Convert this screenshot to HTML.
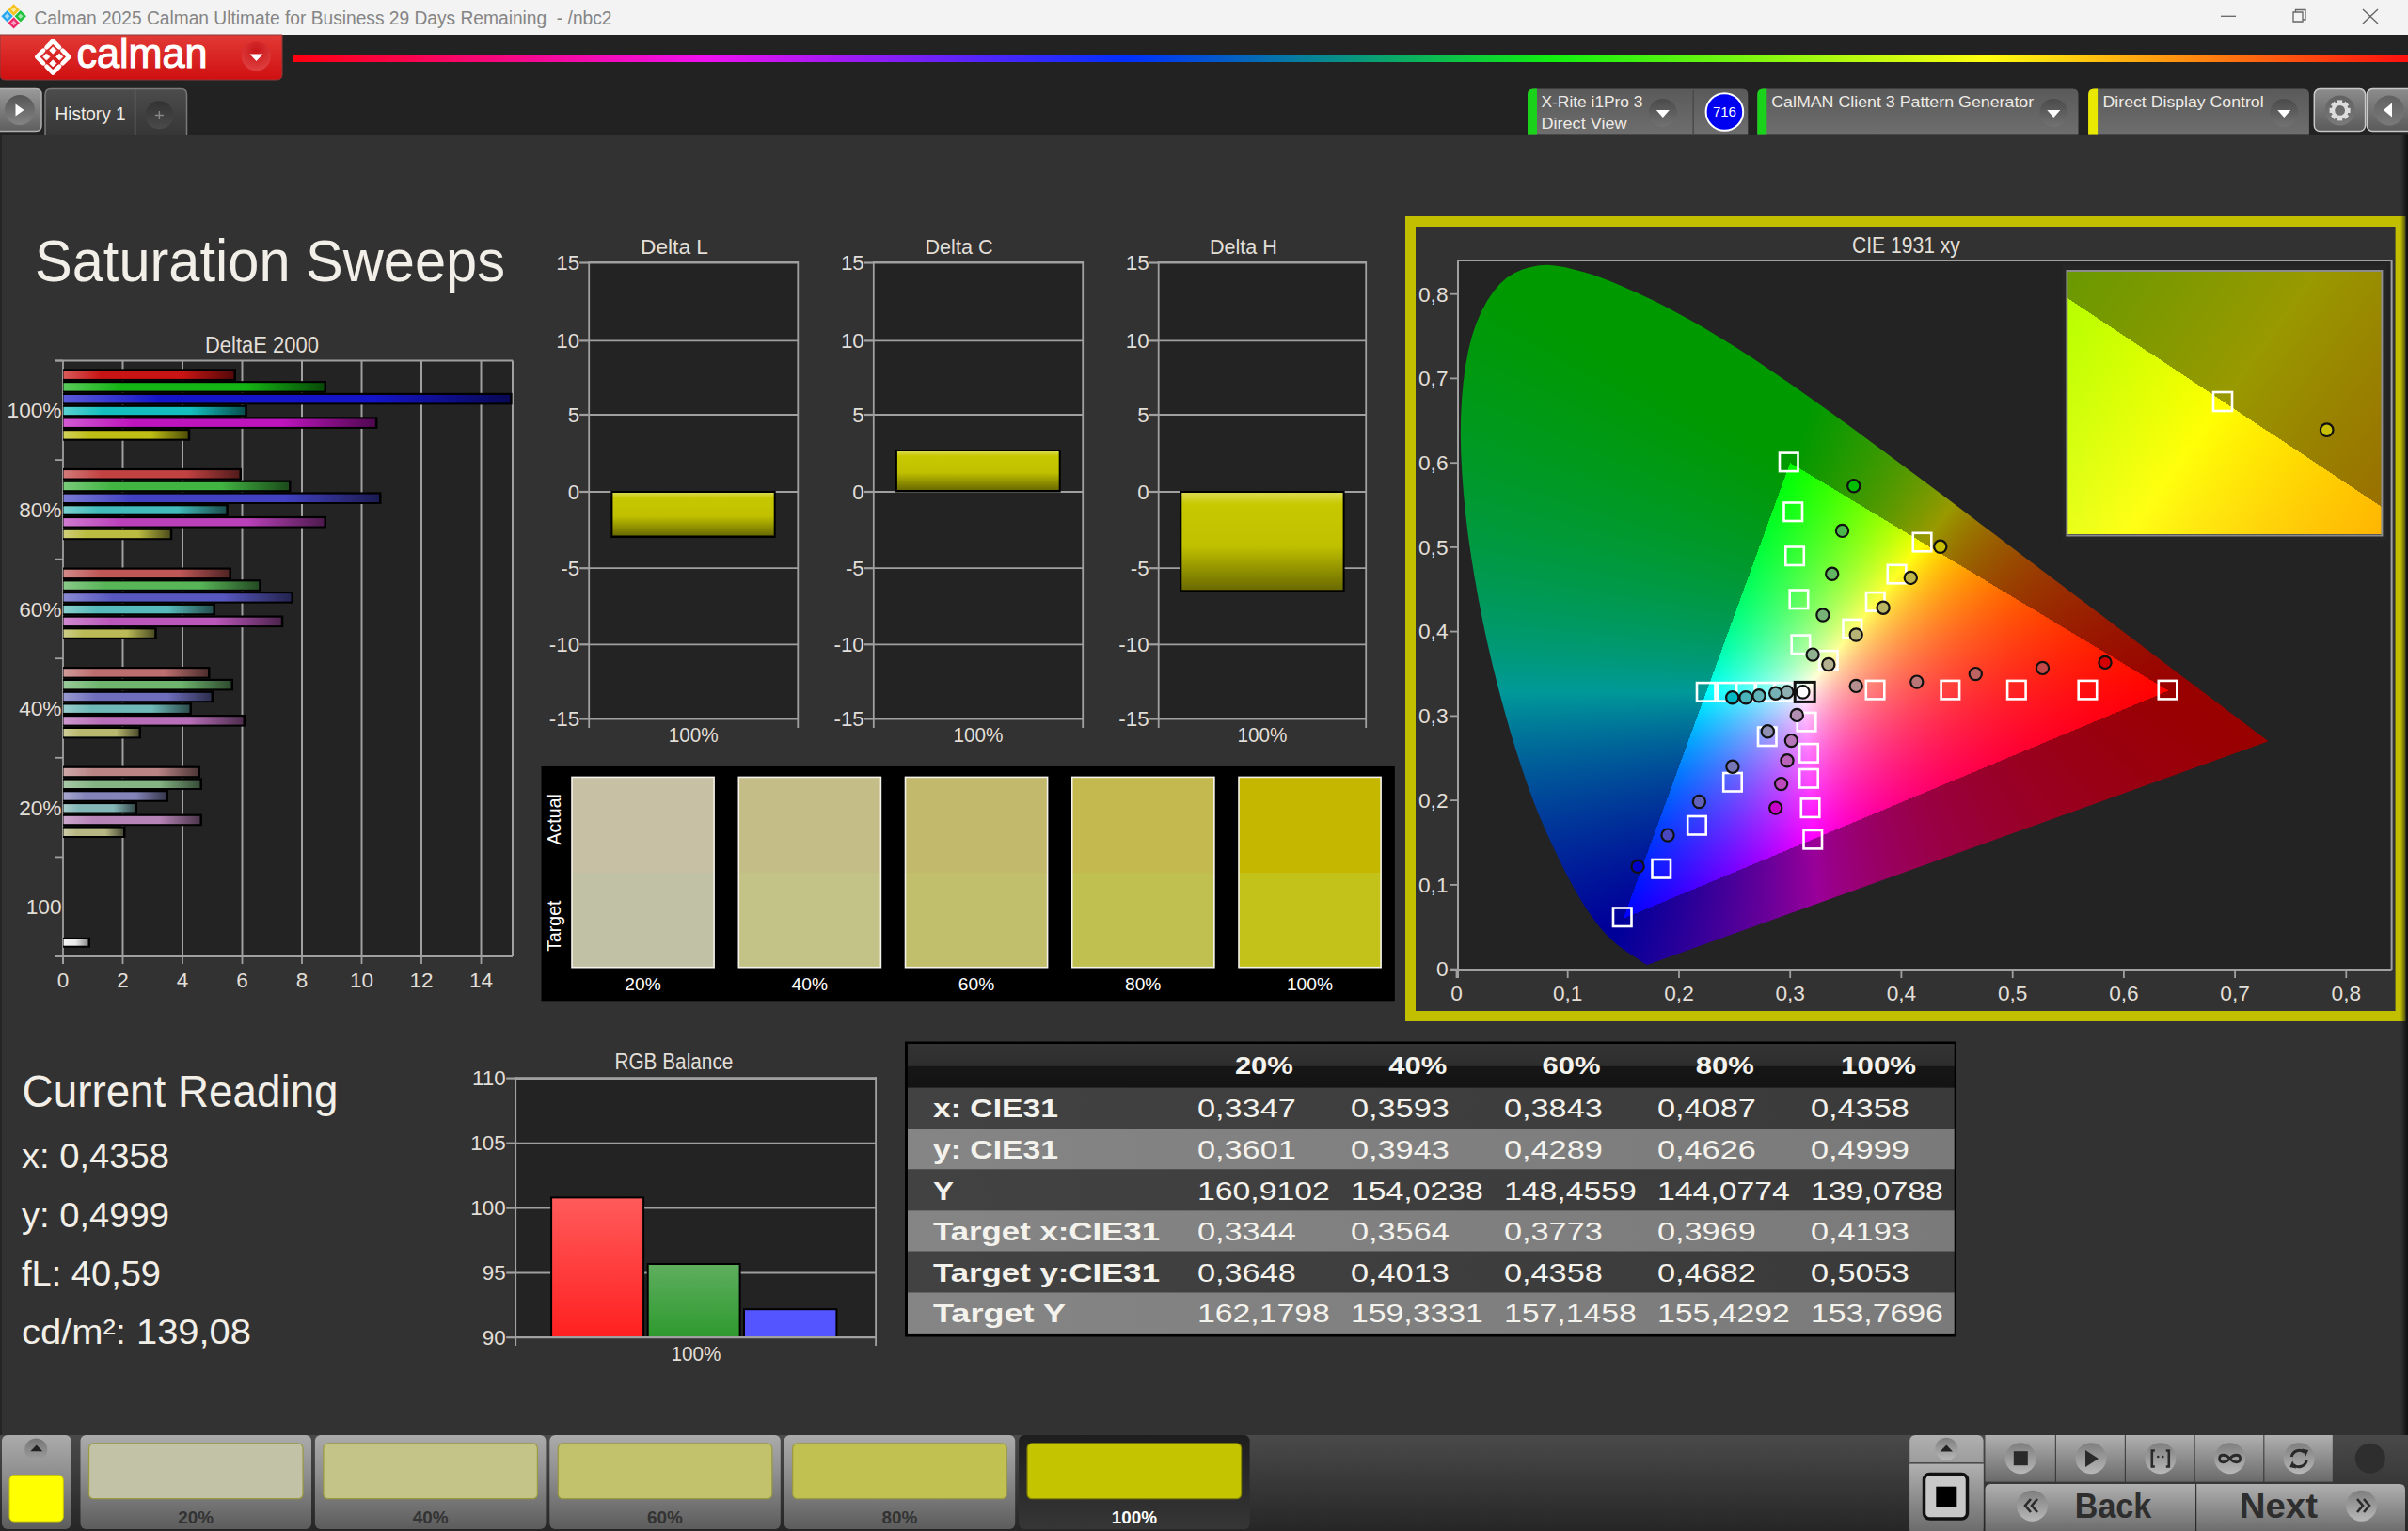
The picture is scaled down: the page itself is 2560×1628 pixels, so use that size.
<!DOCTYPE html>
<html><head><meta charset="utf-8"><title>Calman</title>
<style>
html,body{margin:0;padding:0;width:2560px;height:1628px;overflow:hidden;background:#323232;}
body{position:relative;font-family:"Liberation Sans", sans-serif;}
svg{position:absolute;left:0;top:0;}
canvas{position:absolute;}
</style></head><body>
<svg width="2560" height="1628" viewBox="0 0 2560 1628" font-family='"Liberation Sans", sans-serif'>
<defs><linearGradient id="gLogo" x1="0" y1="0" x2="0" y2="1"><stop offset="0" stop-color="#e23a36"/><stop offset="1" stop-color="#cf0f10"/></linearGradient><radialGradient id="gDrop" cx="0.5" cy="0.3" r="0.7"><stop offset="0" stop-color="#c8161a"/><stop offset="1" stop-color="#e04040"/></radialGradient><linearGradient id="gRain" x1="0" y1="0" x2="1" y2="0"><stop offset="0" stop-color="#ff0010"/><stop offset="0.195" stop-color="#f010f0"/><stop offset="0.395" stop-color="#0030ff"/><stop offset="0.595" stop-color="#10f010"/><stop offset="0.8" stop-color="#ffff10"/><stop offset="1" stop-color="#ff1010"/></linearGradient><linearGradient id="gBtn" x1="0" y1="0" x2="0" y2="1"><stop offset="0" stop-color="#9a9a9a"/><stop offset="1" stop-color="#5e5e5e"/></linearGradient><linearGradient id="gCirc" x1="0" y1="0" x2="0" y2="1"><stop offset="0" stop-color="#4a4a4a"/><stop offset="1" stop-color="#8a8a8a"/></linearGradient><linearGradient id="gTab" x1="0" y1="0" x2="0" y2="1"><stop offset="0" stop-color="#4c4c4c"/><stop offset="1" stop-color="#363636"/></linearGradient><linearGradient id="gPlus" x1="0" y1="0" x2="0" y2="1"><stop offset="0" stop-color="#333"/><stop offset="1" stop-color="#4a4a4a"/></linearGradient><linearGradient id="gDev" x1="0" y1="0" x2="0" y2="1"><stop offset="0" stop-color="#5a5a5a"/><stop offset="1" stop-color="#6e6e6e"/></linearGradient><linearGradient id="gDrop2" x1="0" y1="0" x2="0" y2="1"><stop offset="0" stop-color="#4a4a4a"/><stop offset="1" stop-color="#727272"/></linearGradient><linearGradient id="gGear" x1="0" y1="0" x2="0" y2="1"><stop offset="0" stop-color="#8c8c8c"/><stop offset="1" stop-color="#5a5a5a"/></linearGradient><linearGradient id="gEdge" x1="0" y1="0" x2="1" y2="0"><stop offset="0" stop-color="#222" stop-opacity="0"/><stop offset="1" stop-color="#111"/></linearGradient><linearGradient id="gb1" x1="0" y1="0" x2="1" y2="0"><stop offset="0" stop-color="#d85a5a"/><stop offset="0.22" stop-color="#c81414"/><stop offset="0.7" stop-color="#c81414"/><stop offset="1" stop-color="#540808"/></linearGradient><linearGradient id="gb2" x1="0" y1="0" x2="1" y2="0"><stop offset="0" stop-color="#5aca5a"/><stop offset="0.22" stop-color="#14b414"/><stop offset="0.7" stop-color="#14b414"/><stop offset="1" stop-color="#084b08"/></linearGradient><linearGradient id="gb3" x1="0" y1="0" x2="1" y2="0"><stop offset="0" stop-color="#5a5ad8"/><stop offset="0.22" stop-color="#1414c8"/><stop offset="0.7" stop-color="#1414c8"/><stop offset="1" stop-color="#080854"/></linearGradient><linearGradient id="gb4" x1="0" y1="0" x2="1" y2="0"><stop offset="0" stop-color="#5ad1d1"/><stop offset="0.22" stop-color="#14bebe"/><stop offset="0.7" stop-color="#14bebe"/><stop offset="1" stop-color="#084f4f"/></linearGradient><linearGradient id="gb5" x1="0" y1="0" x2="1" y2="0"><stop offset="0" stop-color="#d15ad1"/><stop offset="0.22" stop-color="#be14be"/><stop offset="0.7" stop-color="#be14be"/><stop offset="1" stop-color="#4f084f"/></linearGradient><linearGradient id="gb6" x1="0" y1="0" x2="1" y2="0"><stop offset="0" stop-color="#d1d15a"/><stop offset="0.22" stop-color="#bebe14"/><stop offset="0.7" stop-color="#bebe14"/><stop offset="1" stop-color="#4f4f08"/></linearGradient><linearGradient id="gb7" x1="0" y1="0" x2="1" y2="0"><stop offset="0" stop-color="#d47a7a"/><stop offset="0.22" stop-color="#c24141"/><stop offset="0.7" stop-color="#c24141"/><stop offset="1" stop-color="#511b1b"/></linearGradient><linearGradient id="gb8" x1="0" y1="0" x2="1" y2="0"><stop offset="0" stop-color="#7aca7a"/><stop offset="0.22" stop-color="#41b441"/><stop offset="0.7" stop-color="#41b441"/><stop offset="1" stop-color="#1b4b1b"/></linearGradient><linearGradient id="gb9" x1="0" y1="0" x2="1" y2="0"><stop offset="0" stop-color="#7a7ad4"/><stop offset="0.22" stop-color="#4141c2"/><stop offset="0.7" stop-color="#4141c2"/><stop offset="1" stop-color="#1b1b51"/></linearGradient><linearGradient id="gb10" x1="0" y1="0" x2="1" y2="0"><stop offset="0" stop-color="#7acfcf"/><stop offset="0.22" stop-color="#41bbbb"/><stop offset="0.7" stop-color="#41bbbb"/><stop offset="1" stop-color="#1b4e4e"/></linearGradient><linearGradient id="gb11" x1="0" y1="0" x2="1" y2="0"><stop offset="0" stop-color="#cf7acf"/><stop offset="0.22" stop-color="#bb41bb"/><stop offset="0.7" stop-color="#bb41bb"/><stop offset="1" stop-color="#4e1b4e"/></linearGradient><linearGradient id="gb12" x1="0" y1="0" x2="1" y2="0"><stop offset="0" stop-color="#cfcf7a"/><stop offset="0.22" stop-color="#bbbb41"/><stop offset="0.7" stop-color="#bbbb41"/><stop offset="1" stop-color="#4e4e1b"/></linearGradient><linearGradient id="gb13" x1="0" y1="0" x2="1" y2="0"><stop offset="0" stop-color="#d28989"/><stop offset="0.22" stop-color="#c05757"/><stop offset="0.7" stop-color="#c05757"/><stop offset="1" stop-color="#502424"/></linearGradient><linearGradient id="gb14" x1="0" y1="0" x2="1" y2="0"><stop offset="0" stop-color="#89ca89"/><stop offset="0.22" stop-color="#57b457"/><stop offset="0.7" stop-color="#57b457"/><stop offset="1" stop-color="#244b24"/></linearGradient><linearGradient id="gb15" x1="0" y1="0" x2="1" y2="0"><stop offset="0" stop-color="#8989d2"/><stop offset="0.22" stop-color="#5757c0"/><stop offset="0.7" stop-color="#5757c0"/><stop offset="1" stop-color="#242450"/></linearGradient><linearGradient id="gb16" x1="0" y1="0" x2="1" y2="0"><stop offset="0" stop-color="#89cece"/><stop offset="0.22" stop-color="#57baba"/><stop offset="0.7" stop-color="#57baba"/><stop offset="1" stop-color="#244e4e"/></linearGradient><linearGradient id="gb17" x1="0" y1="0" x2="1" y2="0"><stop offset="0" stop-color="#ce89ce"/><stop offset="0.22" stop-color="#ba57ba"/><stop offset="0.7" stop-color="#ba57ba"/><stop offset="1" stop-color="#4e244e"/></linearGradient><linearGradient id="gb18" x1="0" y1="0" x2="1" y2="0"><stop offset="0" stop-color="#cece89"/><stop offset="0.22" stop-color="#baba57"/><stop offset="0.7" stop-color="#baba57"/><stop offset="1" stop-color="#4e4e24"/></linearGradient><linearGradient id="gb19" x1="0" y1="0" x2="1" y2="0"><stop offset="0" stop-color="#d09999"/><stop offset="0.22" stop-color="#bd6e6e"/><stop offset="0.7" stop-color="#bd6e6e"/><stop offset="1" stop-color="#4f2e2e"/></linearGradient><linearGradient id="gb20" x1="0" y1="0" x2="1" y2="0"><stop offset="0" stop-color="#99ca99"/><stop offset="0.22" stop-color="#6eb46e"/><stop offset="0.7" stop-color="#6eb46e"/><stop offset="1" stop-color="#2e4b2e"/></linearGradient><linearGradient id="gb21" x1="0" y1="0" x2="1" y2="0"><stop offset="0" stop-color="#9999d0"/><stop offset="0.22" stop-color="#6e6ebd"/><stop offset="0.7" stop-color="#6e6ebd"/><stop offset="1" stop-color="#2e2e4f"/></linearGradient><linearGradient id="gb22" x1="0" y1="0" x2="1" y2="0"><stop offset="0" stop-color="#99cdcd"/><stop offset="0.22" stop-color="#6eb8b8"/><stop offset="0.7" stop-color="#6eb8b8"/><stop offset="1" stop-color="#2e4d4d"/></linearGradient><linearGradient id="gb23" x1="0" y1="0" x2="1" y2="0"><stop offset="0" stop-color="#cd99cd"/><stop offset="0.22" stop-color="#b86eb8"/><stop offset="0.7" stop-color="#b86eb8"/><stop offset="1" stop-color="#4d2e4d"/></linearGradient><linearGradient id="gb24" x1="0" y1="0" x2="1" y2="0"><stop offset="0" stop-color="#cdcd99"/><stop offset="0.22" stop-color="#b8b86e"/><stop offset="0.7" stop-color="#b8b86e"/><stop offset="1" stop-color="#4d4d2e"/></linearGradient><linearGradient id="gb25" x1="0" y1="0" x2="1" y2="0"><stop offset="0" stop-color="#cea8a8"/><stop offset="0.22" stop-color="#ba8484"/><stop offset="0.7" stop-color="#ba8484"/><stop offset="1" stop-color="#4e3737"/></linearGradient><linearGradient id="gb26" x1="0" y1="0" x2="1" y2="0"><stop offset="0" stop-color="#a8caa8"/><stop offset="0.22" stop-color="#84b484"/><stop offset="0.7" stop-color="#84b484"/><stop offset="1" stop-color="#374b37"/></linearGradient><linearGradient id="gb27" x1="0" y1="0" x2="1" y2="0"><stop offset="0" stop-color="#a8a8ce"/><stop offset="0.22" stop-color="#8484ba"/><stop offset="0.7" stop-color="#8484ba"/><stop offset="1" stop-color="#37374e"/></linearGradient><linearGradient id="gb28" x1="0" y1="0" x2="1" y2="0"><stop offset="0" stop-color="#a8cccc"/><stop offset="0.22" stop-color="#84b7b7"/><stop offset="0.7" stop-color="#84b7b7"/><stop offset="1" stop-color="#374c4c"/></linearGradient><linearGradient id="gb29" x1="0" y1="0" x2="1" y2="0"><stop offset="0" stop-color="#cca8cc"/><stop offset="0.22" stop-color="#b784b7"/><stop offset="0.7" stop-color="#b784b7"/><stop offset="1" stop-color="#4c374c"/></linearGradient><linearGradient id="gb30" x1="0" y1="0" x2="1" y2="0"><stop offset="0" stop-color="#cccca8"/><stop offset="0.22" stop-color="#b7b784"/><stop offset="0.7" stop-color="#b7b784"/><stop offset="1" stop-color="#4c4c37"/></linearGradient><linearGradient id="gWhite" x1="0" y1="0" x2="1" y2="0"><stop offset="0" stop-color="#f4f4f4"/><stop offset="0.5" stop-color="#e8e8e8"/><stop offset="1" stop-color="#8a8a8a"/></linearGradient><linearGradient id="gYel" x1="0" y1="0" x2="0" y2="1"><stop offset="0" stop-color="#dada50"/><stop offset="0.12" stop-color="#c8c800"/><stop offset="0.55" stop-color="#c0c000"/><stop offset="1" stop-color="#6a6a00"/></linearGradient><linearGradient id="gRed" x1="0" y1="0" x2="0" y2="1"><stop offset="0" stop-color="#ff5a5a"/><stop offset="1" stop-color="#ff2020"/></linearGradient><linearGradient id="gGrn" x1="0" y1="0" x2="0" y2="1"><stop offset="0" stop-color="#5eae5e"/><stop offset="1" stop-color="#2e9a2e"/></linearGradient><linearGradient id="gHdr" x1="0" y1="0" x2="0" y2="1"><stop offset="0" stop-color="#333"/><stop offset="0.5" stop-color="#2e2e2e"/><stop offset="0.52" stop-color="#161616"/><stop offset="1" stop-color="#131313"/></linearGradient><linearGradient id="gRowD" x1="0" y1="0" x2="1" y2="0"><stop offset="0" stop-color="#424242"/><stop offset="1" stop-color="#3a3a3a"/></linearGradient><linearGradient id="gRowL" x1="0" y1="0" x2="1" y2="0"><stop offset="0" stop-color="#858585"/><stop offset="1" stop-color="#7a7a7a"/></linearGradient><linearGradient id="gFall" x1="0" y1="0" x2="0" y2="1"><stop offset="0" stop-color="#009900"/><stop offset="0.45" stop-color="#009a40"/><stop offset="0.62" stop-color="#009a9a"/><stop offset="0.8" stop-color="#0030a0"/><stop offset="1" stop-color="#0000a0"/></linearGradient><linearGradient id="gFallU" x1="0" y1="0" x2="1" y2="0"><stop offset="0" stop-color="#2a9a00"/><stop offset="0.5" stop-color="#9a8a00"/><stop offset="1" stop-color="#9a0000"/></linearGradient><linearGradient id="gFallP" x1="0" y1="0" x2="1" y2="0"><stop offset="0" stop-color="#10009a"/><stop offset="0.5" stop-color="#8a009a"/><stop offset="1" stop-color="#9a0010"/></linearGradient><linearGradient id="gT1" gradientUnits="userSpaceOnUse" x1="1903.2" y1="492.2" x2="2305.2" y2="734.5"><stop offset="0" stop-color="#00ff00"/><stop offset="0.5" stop-color="#ffff00"/><stop offset="1" stop-color="#ff0000"/></linearGradient><linearGradient id="gT2" gradientUnits="userSpaceOnUse" x1="2305.2" y1="734.5" x2="1725.8" y2="976.8"><stop offset="0" stop-color="#ff0000"/><stop offset="0.5" stop-color="#ff00ff"/><stop offset="1" stop-color="#0000ff"/></linearGradient><linearGradient id="gT3" gradientUnits="userSpaceOnUse" x1="1725.8" y1="976.8" x2="1903.2" y2="492.2"><stop offset="0" stop-color="#0000ff"/><stop offset="0.5" stop-color="#00ffff"/><stop offset="1" stop-color="#00ff00"/></linearGradient><radialGradient id="gTW" gradientUnits="userSpaceOnUse" cx="1918.2" cy="735.4" r="160"><stop offset="0" stop-color="#fff" stop-opacity="1"/><stop offset="1" stop-color="#fff" stop-opacity="0"/></radialGradient><linearGradient id="gInA" x1="0" y1="0" x2="1" y2="1"><stop offset="0" stop-color="#5a9400"/><stop offset="1" stop-color="#9a7400"/></linearGradient><linearGradient id="gInB" x1="0" y1="0" x2="1" y2="1"><stop offset="0" stop-color="#b0ff00"/><stop offset="0.5" stop-color="#ffff10"/><stop offset="1" stop-color="#ffb000"/></linearGradient><linearGradient id="gBar" x1="0" y1="0" x2="0" y2="1"><stop offset="0" stop-color="#4a4a4a"/><stop offset="1" stop-color="#262626"/></linearGradient><linearGradient id="gPan" x1="0" y1="0" x2="0" y2="1"><stop offset="0" stop-color="#ababab"/><stop offset="0.45" stop-color="#8c8c8c"/><stop offset="1" stop-color="#5c5c5c"/></linearGradient><linearGradient id="gPanSel" x1="0" y1="0" x2="0" y2="1"><stop offset="0" stop-color="#1e1e1e"/><stop offset="1" stop-color="#363636"/></linearGradient><linearGradient id="gUp" x1="0" y1="0" x2="0" y2="1"><stop offset="0" stop-color="#767676"/><stop offset="1" stop-color="#9e9e9e"/></linearGradient><linearGradient id="gCtl" x1="0" y1="0" x2="0" y2="1"><stop offset="0" stop-color="#b0b0b0"/><stop offset="1" stop-color="#6a6a6a"/></linearGradient><linearGradient id="gCtlC" x1="0" y1="0" x2="0" y2="1"><stop offset="0" stop-color="#7e7e7e"/><stop offset="1" stop-color="#b8b8b8"/></linearGradient></defs>
<rect x="0.0" y="0.0" width="2560.0" height="37.0" fill="#f3f3f3"/><path d="M14.6 4.3 L20.8 10.5 L14.6 16.7 L8.399999999999999 10.5 Z" fill="#f7c21a"/><path d="M14.6 7.71 L17.39 10.5 L14.6 13.29 L11.809999999999999 10.5 Z" fill="#fbe59a"/><path d="M7.6 11.100000000000001 L13.8 17.3 L7.6 23.5 L1.3999999999999995 17.3 Z" fill="#29a8f0"/><path d="M7.6 14.510000000000002 L10.39 17.3 L7.6 20.09 L4.81 17.3 Z" fill="#a9dcf8"/><path d="M21.8 11.100000000000001 L28.0 17.3 L21.8 23.5 L15.600000000000001 17.3 Z" fill="#1fc23a"/><path d="M21.8 14.510000000000002 L24.59 17.3 L21.8 20.09 L19.01 17.3 Z" fill="#9fe5aa"/><path d="M14.6 18.2 L20.8 24.4 L14.6 30.599999999999998 L8.399999999999999 24.4 Z" fill="#ee2a6a"/><path d="M14.6 21.61 L17.39 24.4 L14.6 27.189999999999998 L11.809999999999999 24.4 Z" fill="#f7a5c0"/><text x="36.5" y="25.9" font-size="19.33" fill="#858585" textLength="614.0" lengthAdjust="spacingAndGlyphs">Calman 2025 Calman Ultimate for Business 29 Days Remaining&#160; - /nbc2</text><line x1="2361.0" y1="17.3" x2="2377.0" y2="17.3" stroke="#666" stroke-width="1.3"/><path d="M2438 13 h10 v10 h-10 Z M2440.5 13 v-2.5 h10.5 v10.5 h-3" fill="none" stroke="#666" stroke-width="1.3"/><path d="M2512 10 L2528 25 M2528 10 L2512 25" stroke="#666" stroke-width="1.4"/><rect x="0.0" y="37.0" width="2560.0" height="107.0" fill="#222222"/><path d="M0 37 H300 V79 Q300 85 294 85 H6 Q0 85 0 79 Z" fill="url(#gLogo)" stroke="#8a3a3a" stroke-width="1"/><path d="M49.50 50.30 L56.30 43.50 L63.10 50.30 M66.50 53.70 L73.30 60.50 L66.50 67.30 M63.10 70.70 L56.30 77.50 L49.50 70.70 M46.10 67.30 L39.30 60.50 L46.10 53.70" fill="none" stroke="#fff" stroke-width="4.6" stroke-linecap="round" stroke-linejoin="round"/><path d="M56.3 50.0 L59.9 53.6 L56.3 57.2 L52.7 53.6 Z" fill="#fff" stroke="#fff" stroke-width="0.8" stroke-linejoin="round"/><path d="M49.4 56.9 L53.0 60.5 L49.4 64.1 L45.8 60.5 Z" fill="#fff" stroke="#fff" stroke-width="0.8" stroke-linejoin="round"/><path d="M63.2 56.9 L66.8 60.5 L63.2 64.1 L59.6 60.5 Z" fill="#fff" stroke="#fff" stroke-width="0.8" stroke-linejoin="round"/><path d="M56.3 63.8 L59.9 67.4 L56.3 71.0 L52.7 67.4 Z" fill="#fff" stroke="#fff" stroke-width="0.8" stroke-linejoin="round"/><text x="81.5" y="71.8" font-size="44.13" fill="#ffffff" textLength="139.0" lengthAdjust="spacingAndGlyphs" stroke="#fff" stroke-width="1.1">calman</text><circle cx="272.4" cy="59.8" r="15.5" fill="url(#gDrop)"/><path d="M265.5 57.5 H279.5 L272.5 65 Z" fill="#fff"/><rect x="311.0" y="58.0" width="2249.0" height="8.0" fill="url(#gRain)"/><path d="M-6 94.5 H38 Q44 94.5 44 100.5 V133.5 Q44 139.5 38 139.5 H-6 Z" fill="url(#gBtn)" stroke="#b0b0b0" stroke-width="1.5"/><circle cx="21" cy="117" r="16" fill="url(#gCirc)" opacity="0.85"/><path d="M16.5 110.5 L25.5 117 L16.5 123.5 Z" fill="#fff"/><path d="M48 144 V100.5 Q48 94.6 54 94.6 H192.5 Q198.5 94.6 198.5 100.5 V144" fill="url(#gTab)" stroke="#7a7a7a" stroke-width="1.5"/><line x1="143.6" y1="95.5" x2="143.6" y2="144.0" stroke="#6a6a6a" stroke-width="1.5"/><text x="58.5" y="128.2" font-size="19.33" fill="#eeebe6" textLength="75.0" lengthAdjust="spacingAndGlyphs">History 1</text><circle cx="169.4" cy="122.3" r="15" fill="url(#gPlus)"/><path d="M169.4 118 V127 M164.9 122.5 H173.9" stroke="#888" stroke-width="1.4"/><path d="M1624 143.6 V100.6 Q1624 94.6 1630 94.6 H1852.3 Q1858.3 94.6 1858.3 100.6 V143.6 Z" fill="url(#gDev)"/><path d="M1624 143.6 V100.6 Q1624 94.6 1630 94.6 H1634 V143.6 Z" fill="#1ad21a"/><text x="1638.5" y="114.0" font-size="16.86" fill="#eeebe6" textLength="108.0" lengthAdjust="spacingAndGlyphs">X-Rite i1Pro 3</text><text x="1638.5" y="137.3" font-size="16.86" fill="#eeebe6" textLength="91.0" lengthAdjust="spacingAndGlyphs">Direct View</text><circle cx="1767.8" cy="119.9" r="15" fill="url(#gDrop2)"/><path d="M1760.8 117 H1774.8 L1767.8 125 Z" fill="#fff"/><line x1="1800.2" y1="96.0" x2="1800.2" y2="143.6" stroke="#4a4a4a" stroke-width="1.5"/><circle cx="1833.4" cy="119" r="19.8" fill="#0000f0" stroke="#fff" stroke-width="2"/><text x="1833.4" y="124.0" font-size="14.53" fill="#ffffff" text-anchor="middle" textLength="25.0" lengthAdjust="spacingAndGlyphs">716</text><path d="M1868.3 143.6 V100.6 Q1868.3 94.6 1874.3 94.6 H2203.5 Q2209.5 94.6 2209.5 100.6 V143.6 Z" fill="url(#gDev)"/><path d="M1868.3 143.6 V100.6 Q1868.3 94.6 1874.3 94.6 H1878.3 V143.6 Z" fill="#1ad21a"/><text x="1883.2" y="114.0" font-size="16.86" fill="#eeebe6" textLength="279.0" lengthAdjust="spacingAndGlyphs">CalMAN Client 3 Pattern Generator</text><circle cx="2183.3" cy="119.9" r="15" fill="url(#gDrop2)"/><path d="M2176.3 117 H2190.3 L2183.3 125 Z" fill="#fff"/><path d="M2220.1 143.6 V100.6 Q2220.1 94.6 2226.1 94.6 H2448.9 Q2454.9 94.6 2454.9 100.6 V143.6 Z" fill="url(#gDev)"/><path d="M2220.1 143.6 V100.6 Q2220.1 94.6 2226.1 94.6 H2230.1 V143.6 Z" fill="#e8e800"/><text x="2235.6" y="114.0" font-size="16.86" fill="#eeebe6" textLength="171.0" lengthAdjust="spacingAndGlyphs">Direct Display Control</text><circle cx="2428.3" cy="119.9" r="15" fill="url(#gDrop2)"/><path d="M2421.3 117 H2435.3 L2428.3 125 Z" fill="#fff"/><rect x="2460.3" y="94.6" width="54.3" height="44.9" rx="6" fill="url(#gGear)" stroke="#c8c8c8" stroke-width="1.5"/><circle cx="2487.6" cy="117.4" r="16" fill="url(#gCirc)" opacity="0.6"/><rect x="-2.6" y="-11" width="5.2" height="5" transform="translate(2487.6 117.4) rotate(0)" fill="#ddd"/><rect x="-2.6" y="-11" width="5.2" height="5" transform="translate(2487.6 117.4) rotate(45)" fill="#ddd"/><rect x="-2.6" y="-11" width="5.2" height="5" transform="translate(2487.6 117.4) rotate(90)" fill="#ddd"/><rect x="-2.6" y="-11" width="5.2" height="5" transform="translate(2487.6 117.4) rotate(135)" fill="#ddd"/><rect x="-2.6" y="-11" width="5.2" height="5" transform="translate(2487.6 117.4) rotate(180)" fill="#ddd"/><rect x="-2.6" y="-11" width="5.2" height="5" transform="translate(2487.6 117.4) rotate(225)" fill="#ddd"/><rect x="-2.6" y="-11" width="5.2" height="5" transform="translate(2487.6 117.4) rotate(270)" fill="#ddd"/><rect x="-2.6" y="-11" width="5.2" height="5" transform="translate(2487.6 117.4) rotate(315)" fill="#ddd"/><circle cx="2487.6" cy="117.4" r="7.2" fill="none" stroke="#ddd" stroke-width="3.6"/><rect x="2516.3" y="94.6" width="60" height="44.9" rx="6" fill="url(#gGear)" stroke="#c8c8c8" stroke-width="1.5"/><circle cx="2540" cy="117.4" r="16" fill="url(#gCirc)" opacity="0.6"/><path d="M2534 117 L2543 109.5 V124.5 Z" fill="#fff"/><rect x="2552.0" y="144.0" width="8.0" height="1382.0" fill="url(#gEdge)"/><text x="37.0" y="299.0" font-size="62.94" fill="#f2efe8" textLength="500.0" lengthAdjust="spacingAndGlyphs">Saturation Sweeps</text><text x="278.4" y="375.0" font-size="23.98" fill="#e2dfd8" text-anchor="middle" textLength="121.0" lengthAdjust="spacingAndGlyphs">DeltaE 2000</text><rect x="67.0" y="383.5" width="478.0" height="633.5" fill="#232323"/><line x1="130.5" y1="383.5" x2="130.5" y2="1017.0" stroke="#a0a0a0" stroke-width="2"/><line x1="194.0" y1="383.5" x2="194.0" y2="1017.0" stroke="#a0a0a0" stroke-width="2"/><line x1="257.5" y1="383.5" x2="257.5" y2="1017.0" stroke="#a0a0a0" stroke-width="2"/><line x1="321.0" y1="383.5" x2="321.0" y2="1017.0" stroke="#a0a0a0" stroke-width="2"/><line x1="384.5" y1="383.5" x2="384.5" y2="1017.0" stroke="#a0a0a0" stroke-width="2"/><line x1="448.0" y1="383.5" x2="448.0" y2="1017.0" stroke="#a0a0a0" stroke-width="2"/><line x1="511.5" y1="383.5" x2="511.5" y2="1017.0" stroke="#a0a0a0" stroke-width="2"/><line x1="545.0" y1="383.5" x2="545.0" y2="1017.0" stroke="#a0a0a0" stroke-width="2"/><line x1="58.0" y1="383.5" x2="545.0" y2="383.5" stroke="#a0a0a0" stroke-width="1.8"/><line x1="67.0" y1="383.5" x2="67.0" y2="1025.0" stroke="#a0a0a0" stroke-width="1.8"/><line x1="58.0" y1="1017.0" x2="545.0" y2="1017.0" stroke="#a0a0a0" stroke-width="1.8"/><line x1="58.0" y1="383.5" x2="67.0" y2="383.5" stroke="#a0a0a0" stroke-width="1.8"/><line x1="58.0" y1="489.1" x2="67.0" y2="489.1" stroke="#a0a0a0" stroke-width="1.8"/><line x1="58.0" y1="594.7" x2="67.0" y2="594.7" stroke="#a0a0a0" stroke-width="1.8"/><line x1="58.0" y1="700.2" x2="67.0" y2="700.2" stroke="#a0a0a0" stroke-width="1.8"/><line x1="58.0" y1="805.8" x2="67.0" y2="805.8" stroke="#a0a0a0" stroke-width="1.8"/><line x1="58.0" y1="911.4" x2="67.0" y2="911.4" stroke="#a0a0a0" stroke-width="1.8"/><line x1="58.0" y1="1017.0" x2="67.0" y2="1017.0" stroke="#a0a0a0" stroke-width="1.8"/><line x1="67.0" y1="1017.0" x2="67.0" y2="1025.0" stroke="#a0a0a0" stroke-width="1.8"/><text x="67.0" y="1050.0" font-size="22.53" fill="#e2dfd8" text-anchor="middle">0</text><line x1="130.5" y1="1017.0" x2="130.5" y2="1025.0" stroke="#a0a0a0" stroke-width="1.8"/><text x="130.5" y="1050.0" font-size="22.53" fill="#e2dfd8" text-anchor="middle">2</text><line x1="194.0" y1="1017.0" x2="194.0" y2="1025.0" stroke="#a0a0a0" stroke-width="1.8"/><text x="194.0" y="1050.0" font-size="22.53" fill="#e2dfd8" text-anchor="middle">4</text><line x1="257.5" y1="1017.0" x2="257.5" y2="1025.0" stroke="#a0a0a0" stroke-width="1.8"/><text x="257.5" y="1050.0" font-size="22.53" fill="#e2dfd8" text-anchor="middle">6</text><line x1="321.0" y1="1017.0" x2="321.0" y2="1025.0" stroke="#a0a0a0" stroke-width="1.8"/><text x="321.0" y="1050.0" font-size="22.53" fill="#e2dfd8" text-anchor="middle">8</text><line x1="384.5" y1="1017.0" x2="384.5" y2="1025.0" stroke="#a0a0a0" stroke-width="1.8"/><text x="384.5" y="1050.0" font-size="22.53" fill="#e2dfd8" text-anchor="middle">10</text><line x1="448.0" y1="1017.0" x2="448.0" y2="1025.0" stroke="#a0a0a0" stroke-width="1.8"/><text x="448.0" y="1050.0" font-size="22.53" fill="#e2dfd8" text-anchor="middle">12</text><line x1="511.5" y1="1017.0" x2="511.5" y2="1025.0" stroke="#a0a0a0" stroke-width="1.8"/><text x="511.5" y="1050.0" font-size="22.53" fill="#e2dfd8" text-anchor="middle">14</text><text x="65.5" y="444.3" font-size="22.67" fill="#e2dfd8" text-anchor="end">100%</text><text x="65.5" y="549.9" font-size="22.67" fill="#e2dfd8" text-anchor="end">80%</text><text x="65.5" y="655.5" font-size="22.67" fill="#e2dfd8" text-anchor="end">60%</text><text x="65.5" y="761.0" font-size="22.67" fill="#e2dfd8" text-anchor="end">40%</text><text x="65.5" y="866.6" font-size="22.67" fill="#e2dfd8" text-anchor="end">20%</text><text x="65.5" y="972.2" font-size="22.67" fill="#e2dfd8" text-anchor="end">100</text><rect x="67.0" y="392.3" width="184.0" height="12.6" fill="#000"/><rect x="67.5" y="394.5" width="181.0" height="8.4" fill="url(#gb1)"/><rect x="67.0" y="405.1" width="280.0" height="12.6" fill="#000"/><rect x="67.5" y="407.2" width="277.0" height="8.4" fill="url(#gb2)"/><rect x="67.0" y="417.8" width="477.6" height="12.6" fill="#000"/><rect x="67.5" y="420.0" width="474.6" height="8.4" fill="url(#gb3)"/><rect x="67.0" y="430.6" width="195.8" height="12.6" fill="#000"/><rect x="67.5" y="432.8" width="192.8" height="8.4" fill="url(#gb4)"/><rect x="67.0" y="443.3" width="334.4" height="12.6" fill="#000"/><rect x="67.5" y="445.5" width="331.4" height="8.4" fill="url(#gb5)"/><rect x="67.0" y="456.1" width="135.2" height="12.6" fill="#000"/><rect x="67.5" y="458.2" width="132.2" height="8.4" fill="url(#gb6)"/><rect x="67.0" y="497.9" width="190.0" height="12.6" fill="#000"/><rect x="67.5" y="500.1" width="187.0" height="8.4" fill="url(#gb7)"/><rect x="67.0" y="510.6" width="242.5" height="12.6" fill="#000"/><rect x="67.5" y="512.8" width="239.5" height="8.4" fill="url(#gb8)"/><rect x="67.0" y="523.4" width="338.5" height="12.6" fill="#000"/><rect x="67.5" y="525.6" width="335.5" height="8.4" fill="url(#gb9)"/><rect x="67.0" y="536.1" width="175.8" height="12.6" fill="#000"/><rect x="67.5" y="538.3" width="172.8" height="8.4" fill="url(#gb10)"/><rect x="67.0" y="548.9" width="280.0" height="12.6" fill="#000"/><rect x="67.5" y="551.1" width="277.0" height="8.4" fill="url(#gb11)"/><rect x="67.0" y="561.6" width="116.3" height="12.6" fill="#000"/><rect x="67.5" y="563.8" width="113.3" height="8.4" fill="url(#gb12)"/><rect x="67.0" y="603.5" width="179.0" height="12.6" fill="#000"/><rect x="67.5" y="605.7" width="176.0" height="8.4" fill="url(#gb13)"/><rect x="67.0" y="616.2" width="210.7" height="12.6" fill="#000"/><rect x="67.5" y="618.4" width="207.7" height="8.4" fill="url(#gb14)"/><rect x="67.0" y="629.0" width="245.0" height="12.6" fill="#000"/><rect x="67.5" y="631.2" width="242.0" height="8.4" fill="url(#gb15)"/><rect x="67.0" y="641.7" width="162.0" height="12.6" fill="#000"/><rect x="67.5" y="643.9" width="159.0" height="8.4" fill="url(#gb16)"/><rect x="67.0" y="654.5" width="234.3" height="12.6" fill="#000"/><rect x="67.5" y="656.7" width="231.3" height="8.4" fill="url(#gb17)"/><rect x="67.0" y="667.2" width="99.7" height="12.6" fill="#000"/><rect x="67.5" y="669.4" width="96.7" height="8.4" fill="url(#gb18)"/><rect x="67.0" y="709.0" width="156.5" height="12.6" fill="#000"/><rect x="67.5" y="711.2" width="153.5" height="8.4" fill="url(#gb19)"/><rect x="67.0" y="721.8" width="181.0" height="12.6" fill="#000"/><rect x="67.5" y="724.0" width="178.0" height="8.4" fill="url(#gb20)"/><rect x="67.0" y="734.5" width="160.0" height="12.6" fill="#000"/><rect x="67.5" y="736.8" width="157.0" height="8.4" fill="url(#gb21)"/><rect x="67.0" y="747.3" width="137.0" height="12.6" fill="#000"/><rect x="67.5" y="749.5" width="134.0" height="8.4" fill="url(#gb22)"/><rect x="67.0" y="760.0" width="194.0" height="12.6" fill="#000"/><rect x="67.5" y="762.2" width="191.0" height="8.4" fill="url(#gb23)"/><rect x="67.0" y="772.8" width="83.0" height="12.6" fill="#000"/><rect x="67.5" y="775.0" width="80.0" height="8.4" fill="url(#gb24)"/><rect x="67.0" y="814.6" width="146.0" height="12.6" fill="#000"/><rect x="67.5" y="816.8" width="143.0" height="8.4" fill="url(#gb25)"/><rect x="67.0" y="827.4" width="148.0" height="12.6" fill="#000"/><rect x="67.5" y="829.6" width="145.0" height="8.4" fill="url(#gb26)"/><rect x="67.0" y="840.1" width="112.0" height="12.6" fill="#000"/><rect x="67.5" y="842.3" width="109.0" height="8.4" fill="url(#gb27)"/><rect x="67.0" y="852.9" width="79.0" height="12.6" fill="#000"/><rect x="67.5" y="855.1" width="76.0" height="8.4" fill="url(#gb28)"/><rect x="67.0" y="865.6" width="148.0" height="12.6" fill="#000"/><rect x="67.5" y="867.8" width="145.0" height="8.4" fill="url(#gb29)"/><rect x="67.0" y="878.4" width="66.5" height="12.6" fill="#000"/><rect x="67.5" y="880.6" width="63.5" height="8.4" fill="url(#gb30)"/><rect x="67.0" y="996.9" width="29.0" height="10.8" fill="#000"/><rect x="67.5" y="998.9" width="26.0" height="6.8" fill="url(#gWhite)"/><rect x="626.2" y="279.5" width="222.1" height="485.0" fill="#232323"/><text x="717.0" y="270.4" font-size="22.82" fill="#e2dfd8" text-anchor="middle" textLength="72.0" lengthAdjust="spacingAndGlyphs">Delta L</text><line x1="626.2" y1="279.5" x2="848.3" y2="279.5" stroke="#a0a0a0" stroke-width="1.8"/><line x1="616.2" y1="279.5" x2="626.2" y2="279.5" stroke="#a0a0a0" stroke-width="2.2"/><text x="616.2" y="287.2" font-size="22.38" fill="#e2dfd8" text-anchor="end">15</text><line x1="626.2" y1="362.4" x2="848.3" y2="362.4" stroke="#a0a0a0" stroke-width="1.8"/><line x1="616.2" y1="362.4" x2="626.2" y2="362.4" stroke="#a0a0a0" stroke-width="2.2"/><text x="616.2" y="370.1" font-size="22.38" fill="#e2dfd8" text-anchor="end">10</text><line x1="626.2" y1="441.0" x2="848.3" y2="441.0" stroke="#a0a0a0" stroke-width="1.8"/><line x1="616.2" y1="441.0" x2="626.2" y2="441.0" stroke="#a0a0a0" stroke-width="2.2"/><text x="616.2" y="448.7" font-size="22.38" fill="#e2dfd8" text-anchor="end">5</text><line x1="626.2" y1="523.0" x2="848.3" y2="523.0" stroke="#a0a0a0" stroke-width="1.8"/><line x1="616.2" y1="523.0" x2="626.2" y2="523.0" stroke="#a0a0a0" stroke-width="2.2"/><text x="616.2" y="530.7" font-size="22.38" fill="#e2dfd8" text-anchor="end">0</text><line x1="626.2" y1="604.2" x2="848.3" y2="604.2" stroke="#a0a0a0" stroke-width="1.8"/><line x1="616.2" y1="604.2" x2="626.2" y2="604.2" stroke="#a0a0a0" stroke-width="2.2"/><text x="616.2" y="611.9" font-size="22.38" fill="#e2dfd8" text-anchor="end">-5</text><line x1="626.2" y1="685.3" x2="848.3" y2="685.3" stroke="#a0a0a0" stroke-width="1.8"/><line x1="616.2" y1="685.3" x2="626.2" y2="685.3" stroke="#a0a0a0" stroke-width="2.2"/><text x="616.2" y="693.0" font-size="22.38" fill="#e2dfd8" text-anchor="end">-10</text><line x1="626.2" y1="764.5" x2="848.3" y2="764.5" stroke="#a0a0a0" stroke-width="1.8"/><line x1="616.2" y1="764.5" x2="626.2" y2="764.5" stroke="#a0a0a0" stroke-width="2.2"/><text x="616.2" y="772.2" font-size="22.38" fill="#e2dfd8" text-anchor="end">-15</text><line x1="626.2" y1="278.5" x2="848.3" y2="278.5" stroke="#a0a0a0" stroke-width="1.2"/><line x1="626.2" y1="278.0" x2="626.2" y2="774.0" stroke="#a0a0a0" stroke-width="1.8"/><line x1="848.3" y1="278.0" x2="848.3" y2="774.0" stroke="#a0a0a0" stroke-width="1.8"/><rect x="649.4" y="522.0" width="175.3" height="50.0" fill="#000"/><rect x="651.4" y="524.0" width="171.3" height="45.5" fill="url(#gYel)"/><text x="737.2" y="789.0" font-size="22.67" fill="#e2dfd8" text-anchor="middle" textLength="53.0" lengthAdjust="spacingAndGlyphs">100%</text><rect x="928.8" y="279.5" width="222.4" height="485.0" fill="#232323"/><text x="1019.5" y="270.4" font-size="22.82" fill="#e2dfd8" text-anchor="middle" textLength="72.0" lengthAdjust="spacingAndGlyphs">Delta C</text><line x1="928.8" y1="279.5" x2="1151.2" y2="279.5" stroke="#a0a0a0" stroke-width="1.8"/><line x1="918.8" y1="279.5" x2="928.8" y2="279.5" stroke="#a0a0a0" stroke-width="2.2"/><text x="918.8" y="287.2" font-size="22.38" fill="#e2dfd8" text-anchor="end">15</text><line x1="928.8" y1="362.4" x2="1151.2" y2="362.4" stroke="#a0a0a0" stroke-width="1.8"/><line x1="918.8" y1="362.4" x2="928.8" y2="362.4" stroke="#a0a0a0" stroke-width="2.2"/><text x="918.8" y="370.1" font-size="22.38" fill="#e2dfd8" text-anchor="end">10</text><line x1="928.8" y1="441.0" x2="1151.2" y2="441.0" stroke="#a0a0a0" stroke-width="1.8"/><line x1="918.8" y1="441.0" x2="928.8" y2="441.0" stroke="#a0a0a0" stroke-width="2.2"/><text x="918.8" y="448.7" font-size="22.38" fill="#e2dfd8" text-anchor="end">5</text><line x1="928.8" y1="523.0" x2="1151.2" y2="523.0" stroke="#a0a0a0" stroke-width="1.8"/><line x1="918.8" y1="523.0" x2="928.8" y2="523.0" stroke="#a0a0a0" stroke-width="2.2"/><text x="918.8" y="530.7" font-size="22.38" fill="#e2dfd8" text-anchor="end">0</text><line x1="928.8" y1="604.2" x2="1151.2" y2="604.2" stroke="#a0a0a0" stroke-width="1.8"/><line x1="918.8" y1="604.2" x2="928.8" y2="604.2" stroke="#a0a0a0" stroke-width="2.2"/><text x="918.8" y="611.9" font-size="22.38" fill="#e2dfd8" text-anchor="end">-5</text><line x1="928.8" y1="685.3" x2="1151.2" y2="685.3" stroke="#a0a0a0" stroke-width="1.8"/><line x1="918.8" y1="685.3" x2="928.8" y2="685.3" stroke="#a0a0a0" stroke-width="2.2"/><text x="918.8" y="693.0" font-size="22.38" fill="#e2dfd8" text-anchor="end">-10</text><line x1="928.8" y1="764.5" x2="1151.2" y2="764.5" stroke="#a0a0a0" stroke-width="1.8"/><line x1="918.8" y1="764.5" x2="928.8" y2="764.5" stroke="#a0a0a0" stroke-width="2.2"/><text x="918.8" y="772.2" font-size="22.38" fill="#e2dfd8" text-anchor="end">-15</text><line x1="928.8" y1="278.5" x2="1151.2" y2="278.5" stroke="#a0a0a0" stroke-width="1.2"/><line x1="928.8" y1="278.0" x2="928.8" y2="774.0" stroke="#a0a0a0" stroke-width="1.8"/><line x1="1151.2" y1="278.0" x2="1151.2" y2="774.0" stroke="#a0a0a0" stroke-width="1.8"/><rect x="951.9" y="478.0" width="175.8" height="45.5" fill="#000"/><rect x="953.9" y="480.0" width="171.8" height="41.0" fill="url(#gYel)"/><text x="1040.0" y="789.0" font-size="22.67" fill="#e2dfd8" text-anchor="middle" textLength="53.0" lengthAdjust="spacingAndGlyphs">100%</text><rect x="1231.7" y="279.5" width="220.5" height="485.0" fill="#232323"/><text x="1321.9" y="270.4" font-size="22.82" fill="#e2dfd8" text-anchor="middle" textLength="72.0" lengthAdjust="spacingAndGlyphs">Delta H</text><line x1="1231.7" y1="279.5" x2="1452.2" y2="279.5" stroke="#a0a0a0" stroke-width="1.8"/><line x1="1221.7" y1="279.5" x2="1231.7" y2="279.5" stroke="#a0a0a0" stroke-width="2.2"/><text x="1221.7" y="287.2" font-size="22.38" fill="#e2dfd8" text-anchor="end">15</text><line x1="1231.7" y1="362.4" x2="1452.2" y2="362.4" stroke="#a0a0a0" stroke-width="1.8"/><line x1="1221.7" y1="362.4" x2="1231.7" y2="362.4" stroke="#a0a0a0" stroke-width="2.2"/><text x="1221.7" y="370.1" font-size="22.38" fill="#e2dfd8" text-anchor="end">10</text><line x1="1231.7" y1="441.0" x2="1452.2" y2="441.0" stroke="#a0a0a0" stroke-width="1.8"/><line x1="1221.7" y1="441.0" x2="1231.7" y2="441.0" stroke="#a0a0a0" stroke-width="2.2"/><text x="1221.7" y="448.7" font-size="22.38" fill="#e2dfd8" text-anchor="end">5</text><line x1="1231.7" y1="523.0" x2="1452.2" y2="523.0" stroke="#a0a0a0" stroke-width="1.8"/><line x1="1221.7" y1="523.0" x2="1231.7" y2="523.0" stroke="#a0a0a0" stroke-width="2.2"/><text x="1221.7" y="530.7" font-size="22.38" fill="#e2dfd8" text-anchor="end">0</text><line x1="1231.7" y1="604.2" x2="1452.2" y2="604.2" stroke="#a0a0a0" stroke-width="1.8"/><line x1="1221.7" y1="604.2" x2="1231.7" y2="604.2" stroke="#a0a0a0" stroke-width="2.2"/><text x="1221.7" y="611.9" font-size="22.38" fill="#e2dfd8" text-anchor="end">-5</text><line x1="1231.7" y1="685.3" x2="1452.2" y2="685.3" stroke="#a0a0a0" stroke-width="1.8"/><line x1="1221.7" y1="685.3" x2="1231.7" y2="685.3" stroke="#a0a0a0" stroke-width="2.2"/><text x="1221.7" y="693.0" font-size="22.38" fill="#e2dfd8" text-anchor="end">-10</text><line x1="1231.7" y1="764.5" x2="1452.2" y2="764.5" stroke="#a0a0a0" stroke-width="1.8"/><line x1="1221.7" y1="764.5" x2="1231.7" y2="764.5" stroke="#a0a0a0" stroke-width="2.2"/><text x="1221.7" y="772.2" font-size="22.38" fill="#e2dfd8" text-anchor="end">-15</text><line x1="1231.7" y1="278.5" x2="1452.2" y2="278.5" stroke="#a0a0a0" stroke-width="1.2"/><line x1="1231.7" y1="278.0" x2="1231.7" y2="774.0" stroke="#a0a0a0" stroke-width="1.8"/><line x1="1452.2" y1="278.0" x2="1452.2" y2="774.0" stroke="#a0a0a0" stroke-width="1.8"/><rect x="1254.3" y="522.0" width="175.3" height="107.8" fill="#000"/><rect x="1256.3" y="524.0" width="171.3" height="103.3" fill="url(#gYel)"/><text x="1342.0" y="789.0" font-size="22.67" fill="#e2dfd8" text-anchor="middle" textLength="53.0" lengthAdjust="spacingAndGlyphs">100%</text><rect x="575.5" y="815.0" width="907.3" height="249.3" fill="#000"/><rect x="607.2" y="825.6" width="152.7" height="203.9" fill="#f4f2ea"/><rect x="608.8" y="827.2" width="149.5" height="100.8" fill="#c7c0a5"/><rect x="608.8" y="928.0" width="149.5" height="99.9" fill="#c1c1a5"/><text x="683.5" y="1053.0" font-size="19.19" fill="#ffffff" text-anchor="middle">20%</text><rect x="784.5" y="825.6" width="152.7" height="203.9" fill="#f4f2ea"/><rect x="786.1" y="827.2" width="149.5" height="100.8" fill="#c5bd87"/><rect x="786.1" y="928.0" width="149.5" height="99.9" fill="#c3c388"/><text x="860.8" y="1053.0" font-size="19.19" fill="#ffffff" text-anchor="middle">40%</text><rect x="961.7" y="825.6" width="152.7" height="203.9" fill="#f4f2ea"/><rect x="963.3" y="827.2" width="149.5" height="100.8" fill="#c3b96d"/><rect x="963.3" y="928.0" width="149.5" height="99.9" fill="#c1bf6c"/><text x="1038.0" y="1053.0" font-size="19.19" fill="#ffffff" text-anchor="middle">60%</text><rect x="1139.0" y="825.6" width="152.7" height="203.9" fill="#f4f2ea"/><rect x="1140.5" y="827.2" width="149.5" height="100.8" fill="#c4b94f"/><rect x="1140.5" y="928.0" width="149.5" height="99.9" fill="#c0c050"/><text x="1215.2" y="1053.0" font-size="19.19" fill="#ffffff" text-anchor="middle">80%</text><rect x="1316.2" y="825.6" width="152.7" height="203.9" fill="#f4f2ea"/><rect x="1317.8" y="827.2" width="149.5" height="100.8" fill="#c5b700"/><rect x="1317.8" y="928.0" width="149.5" height="99.9" fill="#c2c21b"/><text x="1392.5" y="1053.0" font-size="19.19" fill="#ffffff" text-anchor="middle">100%</text><text transform="translate(595.5 871.3) rotate(-90)" font-size="19.5" fill="#fff" text-anchor="middle">Actual</text><text transform="translate(595.5 984.7) rotate(-90)" font-size="19.5" fill="#fff" text-anchor="middle">Target</text><text x="23.6" y="1177.0" font-size="48.84" fill="#f2efe8" textLength="336.0" lengthAdjust="spacingAndGlyphs">Current Reading</text><text x="23.0" y="1241.5" font-size="37.50" fill="#f2efe8" textLength="157.0" lengthAdjust="spacingAndGlyphs">x: 0,4358</text><text x="23.0" y="1304.8" font-size="37.50" fill="#f2efe8" textLength="157.0" lengthAdjust="spacingAndGlyphs">y: 0,4999</text><text x="23.0" y="1366.9" font-size="37.50" fill="#f2efe8" textLength="148.0" lengthAdjust="spacingAndGlyphs">fL: 40,59</text><text x="23.0" y="1429.0" font-size="37.50" fill="#f2efe8" textLength="244.0" lengthAdjust="spacingAndGlyphs">cd/m²: 139,08</text><rect x="548.2" y="1146.6" width="382.9" height="275.6" fill="#232323"/><text x="716.4" y="1137.0" font-size="23.26" fill="#e2dfd8" text-anchor="middle" textLength="126.0" lengthAdjust="spacingAndGlyphs">RGB Balance</text><line x1="548.2" y1="1146.6" x2="931.1" y2="1146.6" stroke="#a0a0a0" stroke-width="1.8"/><line x1="538.2" y1="1146.6" x2="548.2" y2="1146.6" stroke="#a0a0a0" stroke-width="2.2"/><text x="537.7" y="1154.3" font-size="22.38" fill="#e2dfd8" text-anchor="end">110</text><line x1="548.2" y1="1215.7" x2="931.1" y2="1215.7" stroke="#a0a0a0" stroke-width="1.8"/><line x1="538.2" y1="1215.7" x2="548.2" y2="1215.7" stroke="#a0a0a0" stroke-width="2.2"/><text x="537.7" y="1223.4" font-size="22.38" fill="#e2dfd8" text-anchor="end">105</text><line x1="548.2" y1="1284.6" x2="931.1" y2="1284.6" stroke="#a0a0a0" stroke-width="1.8"/><line x1="538.2" y1="1284.6" x2="548.2" y2="1284.6" stroke="#a0a0a0" stroke-width="2.2"/><text x="537.7" y="1292.3" font-size="22.38" fill="#e2dfd8" text-anchor="end">100</text><line x1="548.2" y1="1353.5" x2="931.1" y2="1353.5" stroke="#a0a0a0" stroke-width="1.8"/><line x1="538.2" y1="1353.5" x2="548.2" y2="1353.5" stroke="#a0a0a0" stroke-width="2.2"/><text x="537.7" y="1361.2" font-size="22.38" fill="#e2dfd8" text-anchor="end">95</text><line x1="548.2" y1="1422.2" x2="931.1" y2="1422.2" stroke="#a0a0a0" stroke-width="1.8"/><line x1="538.2" y1="1422.2" x2="548.2" y2="1422.2" stroke="#a0a0a0" stroke-width="2.2"/><text x="537.7" y="1429.9" font-size="22.38" fill="#e2dfd8" text-anchor="end">90</text><line x1="548.2" y1="1146.6" x2="931.1" y2="1146.6" stroke="#a0a0a0" stroke-width="2.6"/><line x1="548.2" y1="1145.0" x2="548.2" y2="1431.0" stroke="#a0a0a0" stroke-width="1.8"/><line x1="931.1" y1="1145.0" x2="931.1" y2="1431.0" stroke="#a0a0a0" stroke-width="1.8"/><rect x="585.1" y="1272.4" width="100.0" height="149.8" fill="#000"/><rect x="587.1" y="1274.4" width="96.0" height="147.8" fill="url(#gRed)"/><rect x="687.7" y="1343.0" width="99.9" height="79.2" fill="#000"/><rect x="689.7" y="1345.0" width="95.9" height="77.2" fill="url(#gGrn)"/><rect x="790.0" y="1391.2" width="100.4" height="31.0" fill="#000"/><rect x="792.0" y="1393.2" width="96.4" height="29.0" fill="#5555ff"/><line x1="548.2" y1="1422.2" x2="931.1" y2="1422.2" stroke="#a0a0a0" stroke-width="2.2"/><text x="739.9" y="1447.0" font-size="22.67" fill="#e2dfd8" text-anchor="middle" textLength="53.0" lengthAdjust="spacingAndGlyphs">100%</text><rect x="962.0" y="1107.5" width="1117.5" height="314.0" fill="#000"/><rect x="965.0" y="1110.0" width="1112.7" height="46.5" fill="url(#gHdr)"/><rect x="965.0" y="1156.5" width="1112.7" height="43.6" fill="url(#gRowD)"/><text x="992.0" y="1188.4" font-size="28.20" fill="#f4f2ec" font-weight="bold" textLength="133.0" lengthAdjust="spacingAndGlyphs">x: CIE31</text><text x="1272.9" y="1188.4" font-size="28.20" fill="#f4f2ec" textLength="105.0" lengthAdjust="spacingAndGlyphs">0,3347</text><text x="1435.9" y="1188.4" font-size="28.20" fill="#f4f2ec" textLength="105.0" lengthAdjust="spacingAndGlyphs">0,3593</text><text x="1598.9" y="1188.4" font-size="28.20" fill="#f4f2ec" textLength="105.0" lengthAdjust="spacingAndGlyphs">0,3843</text><text x="1761.9" y="1188.4" font-size="28.20" fill="#f4f2ec" textLength="105.0" lengthAdjust="spacingAndGlyphs">0,4087</text><text x="1924.9" y="1188.4" font-size="28.20" fill="#f4f2ec" textLength="105.0" lengthAdjust="spacingAndGlyphs">0,4358</text><rect x="965.0" y="1200.1" width="1112.7" height="43.6" fill="url(#gRowL)"/><text x="992.0" y="1232.0" font-size="28.20" fill="#f4f2ec" font-weight="bold" textLength="133.0" lengthAdjust="spacingAndGlyphs">y: CIE31</text><text x="1272.9" y="1232.0" font-size="28.20" fill="#f4f2ec" textLength="105.0" lengthAdjust="spacingAndGlyphs">0,3601</text><text x="1435.9" y="1232.0" font-size="28.20" fill="#f4f2ec" textLength="105.0" lengthAdjust="spacingAndGlyphs">0,3943</text><text x="1598.9" y="1232.0" font-size="28.20" fill="#f4f2ec" textLength="105.0" lengthAdjust="spacingAndGlyphs">0,4289</text><text x="1761.9" y="1232.0" font-size="28.20" fill="#f4f2ec" textLength="105.0" lengthAdjust="spacingAndGlyphs">0,4626</text><text x="1924.9" y="1232.0" font-size="28.20" fill="#f4f2ec" textLength="105.0" lengthAdjust="spacingAndGlyphs">0,4999</text><rect x="965.0" y="1243.6" width="1112.7" height="43.6" fill="url(#gRowD)"/><text x="992.0" y="1275.5" font-size="28.20" fill="#f4f2ec" font-weight="bold" textLength="22.0" lengthAdjust="spacingAndGlyphs">Y</text><text x="1272.9" y="1275.5" font-size="28.20" fill="#f4f2ec" textLength="141.0" lengthAdjust="spacingAndGlyphs">160,9102</text><text x="1435.9" y="1275.5" font-size="28.20" fill="#f4f2ec" textLength="141.0" lengthAdjust="spacingAndGlyphs">154,0238</text><text x="1598.9" y="1275.5" font-size="28.20" fill="#f4f2ec" textLength="141.0" lengthAdjust="spacingAndGlyphs">148,4559</text><text x="1761.9" y="1275.5" font-size="28.20" fill="#f4f2ec" textLength="141.0" lengthAdjust="spacingAndGlyphs">144,0774</text><text x="1924.9" y="1275.5" font-size="28.20" fill="#f4f2ec" textLength="141.0" lengthAdjust="spacingAndGlyphs">139,0788</text><rect x="965.0" y="1287.2" width="1112.7" height="43.6" fill="url(#gRowL)"/><text x="992.0" y="1319.1" font-size="28.20" fill="#f4f2ec" font-weight="bold" textLength="241.0" lengthAdjust="spacingAndGlyphs">Target x:CIE31</text><text x="1272.9" y="1319.1" font-size="28.20" fill="#f4f2ec" textLength="105.0" lengthAdjust="spacingAndGlyphs">0,3344</text><text x="1435.9" y="1319.1" font-size="28.20" fill="#f4f2ec" textLength="105.0" lengthAdjust="spacingAndGlyphs">0,3564</text><text x="1598.9" y="1319.1" font-size="28.20" fill="#f4f2ec" textLength="105.0" lengthAdjust="spacingAndGlyphs">0,3773</text><text x="1761.9" y="1319.1" font-size="28.20" fill="#f4f2ec" textLength="105.0" lengthAdjust="spacingAndGlyphs">0,3969</text><text x="1924.9" y="1319.1" font-size="28.20" fill="#f4f2ec" textLength="105.0" lengthAdjust="spacingAndGlyphs">0,4193</text><rect x="965.0" y="1330.8" width="1112.7" height="43.6" fill="url(#gRowD)"/><text x="992.0" y="1362.7" font-size="28.20" fill="#f4f2ec" font-weight="bold" textLength="241.0" lengthAdjust="spacingAndGlyphs">Target y:CIE31</text><text x="1272.9" y="1362.7" font-size="28.20" fill="#f4f2ec" textLength="105.0" lengthAdjust="spacingAndGlyphs">0,3648</text><text x="1435.9" y="1362.7" font-size="28.20" fill="#f4f2ec" textLength="105.0" lengthAdjust="spacingAndGlyphs">0,4013</text><text x="1598.9" y="1362.7" font-size="28.20" fill="#f4f2ec" textLength="105.0" lengthAdjust="spacingAndGlyphs">0,4358</text><text x="1761.9" y="1362.7" font-size="28.20" fill="#f4f2ec" textLength="105.0" lengthAdjust="spacingAndGlyphs">0,4682</text><text x="1924.9" y="1362.7" font-size="28.20" fill="#f4f2ec" textLength="105.0" lengthAdjust="spacingAndGlyphs">0,5053</text><rect x="965.0" y="1374.3" width="1112.7" height="43.6" fill="url(#gRowL)"/><text x="992.0" y="1406.2" font-size="28.20" fill="#f4f2ec" font-weight="bold" textLength="141.0" lengthAdjust="spacingAndGlyphs">Target Y</text><text x="1272.9" y="1406.2" font-size="28.20" fill="#f4f2ec" textLength="141.0" lengthAdjust="spacingAndGlyphs">162,1798</text><text x="1435.9" y="1406.2" font-size="28.20" fill="#f4f2ec" textLength="141.0" lengthAdjust="spacingAndGlyphs">159,3331</text><text x="1598.9" y="1406.2" font-size="28.20" fill="#f4f2ec" textLength="141.0" lengthAdjust="spacingAndGlyphs">157,1458</text><text x="1761.9" y="1406.2" font-size="28.20" fill="#f4f2ec" textLength="141.0" lengthAdjust="spacingAndGlyphs">155,4292</text><text x="1924.9" y="1406.2" font-size="28.20" fill="#f4f2ec" textLength="141.0" lengthAdjust="spacingAndGlyphs">153,7696</text><text x="1343.9" y="1142.0" font-size="25.00" fill="#f4f2ec" text-anchor="middle" font-weight="bold" textLength="62.0" lengthAdjust="spacingAndGlyphs">20%</text><text x="1507.2" y="1142.0" font-size="25.00" fill="#f4f2ec" text-anchor="middle" font-weight="bold" textLength="62.0" lengthAdjust="spacingAndGlyphs">40%</text><text x="1670.5" y="1142.0" font-size="25.00" fill="#f4f2ec" text-anchor="middle" font-weight="bold" textLength="62.0" lengthAdjust="spacingAndGlyphs">60%</text><text x="1833.8" y="1142.0" font-size="25.00" fill="#f4f2ec" text-anchor="middle" font-weight="bold" textLength="62.0" lengthAdjust="spacingAndGlyphs">80%</text><text x="1997.1" y="1142.0" font-size="25.00" fill="#f4f2ec" text-anchor="middle" font-weight="bold" textLength="80.0" lengthAdjust="spacingAndGlyphs">100%</text><rect x="1499.5" y="235.5" width="1052.6" height="845" fill="none" stroke="#c1bf00" stroke-width="11"/><text x="2026.4" y="268.9" font-size="23.69" fill="#e2dfd8" text-anchor="middle" textLength="115.0" lengthAdjust="spacingAndGlyphs">CIE 1931 xy</text><rect x="1550.0" y="277.0" width="992.6" height="754.0" fill="#232323"/><polygon points="1751.1,1026.0 1751.0,1025.9 1750.7,1025.8 1750.4,1025.7 1750.2,1025.6 1749.8,1025.4 1749.6,1025.2 1749.2,1025.1 1748.9,1024.9 1748.6,1024.6 1748.2,1024.4 1747.8,1024.1 1747.3,1023.9 1746.8,1023.6 1746.3,1023.2 1745.8,1022.9 1745.3,1022.5 1744.7,1022.1 1744.1,1021.7 1743.5,1021.3 1742.9,1020.8 1742.2,1020.3 1741.5,1019.9 1740.7,1019.3 1739.9,1018.8 1739.0,1018.2 1738.0,1017.6 1737.0,1016.9 1735.9,1016.2 1734.8,1015.5 1733.6,1014.7 1732.4,1013.9 1731.2,1013.1 1729.9,1012.2 1728.5,1011.3 1727.0,1010.2 1725.5,1009.1 1723.9,1008.0 1722.3,1006.8 1720.5,1005.4 1718.8,1003.9 1716.9,1002.4 1715.0,1000.8 1713.1,999.1 1711.0,997.1 1708.7,994.8 1706.3,992.2 1703.7,989.3 1701.0,986.2 1698.2,982.7 1695.2,978.7 1692.1,974.4 1688.9,969.8 1685.4,964.7 1681.9,959.0 1678.1,952.7 1674.1,945.8 1670.0,938.3 1665.7,930.1 1661.2,921.3 1656.4,911.5 1651.4,901.0 1646.2,889.7 1640.7,877.5 1635.2,864.5 1629.7,850.5 1624.2,835.4 1618.7,819.4 1613.1,802.4 1607.6,784.5 1602.2,765.9 1596.8,746.2 1591.3,725.5 1586.0,704.0 1580.9,682.2 1576.3,660.2 1572.0,638.0 1567.9,615.2 1564.1,592.3 1560.9,569.6 1558.2,547.4 1556.1,525.7 1554.4,504.1 1553.3,483.0 1552.8,462.5 1553.1,443.0 1554.1,424.2 1555.8,405.9 1558.1,388.5 1561.2,372.3 1564.9,357.4 1569.5,343.8 1574.9,331.3 1580.9,320.1 1587.5,310.2 1594.5,301.9 1602.0,295.3 1610.1,290.2 1618.6,286.5 1627.4,284.0 1636.3,282.3 1645.4,281.8 1654.8,282.6 1664.3,284.3 1674.0,286.7 1683.5,289.2 1693.1,292.0 1702.8,295.5 1712.4,299.3 1722.0,303.3 1731.4,307.4 1740.6,311.5 1749.8,315.7 1758.8,320.1 1767.7,324.6 1776.6,329.2 1785.4,333.9 1794.1,338.7 1802.7,343.6 1811.3,348.6 1820.0,353.7 1828.6,358.9 1837.1,364.2 1845.7,369.6 1854.2,375.1 1862.8,380.6 1871.3,386.2 1879.7,391.9 1888.2,397.7 1896.6,403.5 1905.1,409.3 1913.5,415.2 1922.0,421.2 1930.4,427.2 1938.8,433.2 1947.3,439.3 1955.8,445.4 1964.2,451.6 1972.7,457.8 1981.2,464.0 1989.6,470.2 1998.1,476.4 2006.5,482.7 2014.9,488.9 2023.3,495.2 2031.7,501.5 2040.1,507.8 2048.5,514.0 2056.9,520.3 2065.2,526.6 2073.6,532.8 2081.8,539.0 2090.1,545.3 2098.3,551.5 2106.5,557.6 2114.6,563.8 2122.7,569.9 2130.7,576.0 2138.7,582.0 2146.6,588.0 2154.4,593.9 2162.2,599.8 2169.9,605.7 2177.6,611.5 2185.1,617.2 2192.6,622.8 2200.0,628.4 2207.3,633.9 2214.5,639.3 2221.6,644.7 2228.6,649.9 2235.4,655.1 2242.1,660.2 2248.7,665.2 2255.1,670.1 2261.3,674.8 2267.3,679.3 2273.2,683.8 2278.9,688.1 2284.4,692.2 2289.8,696.3 2295.1,700.3 2300.3,704.2 2305.3,708.0 2310.2,711.7 2314.9,715.3 2319.4,718.6 2323.7,721.9 2327.8,725.0 2331.8,728.0 2335.7,730.9 2339.4,733.7 2342.9,736.3 2346.3,738.9 2349.5,741.4 2352.6,743.7 2355.5,745.9 2358.4,748.1 2361.0,750.1 2363.6,752.1 2366.1,753.9 2368.4,755.7 2370.7,757.4 2372.8,759.0 2374.8,760.5 2376.8,762.0 2378.7,763.4 2380.5,764.8 2382.2,766.1 2383.9,767.3 2385.5,768.6 2387.0,769.7 2388.5,770.9 2389.9,772.0 2391.3,773.0 2392.7,774.0 2394.0,775.0 2395.2,775.9 2396.4,776.8 2397.5,777.7 2398.6,778.5 2399.6,779.3 2400.6,780.0 2401.6,780.7 2402.5,781.4 2403.3,782.0 2404.1,782.6 2404.9,783.2 2405.5,783.7 2406.2,784.2 2406.8,784.7 2407.5,785.2 2408.0,785.6 2408.6,786.0 2409.1,786.4 2409.6,786.8 2410.1,787.1 2410.5,787.5 2411.0,787.8 2411.3,788.1 2411.6,788.3" fill="url(#gFall)"/><polygon points="1903.2,492.2 1905.1,409.3 1913.5,415.2 1922.0,421.2 1930.4,427.2 1938.8,433.2 1947.3,439.3 1955.8,445.4 1964.2,451.6 1972.7,457.8 1981.2,464.0 1989.6,470.2 1998.1,476.4 2006.5,482.7 2014.9,488.9 2023.3,495.2 2031.7,501.5 2040.1,507.8 2048.5,514.0 2056.9,520.3 2065.2,526.6 2073.6,532.8 2081.8,539.0 2090.1,545.3 2098.3,551.5 2106.5,557.6 2114.6,563.8 2122.7,569.9 2130.7,576.0 2138.7,582.0 2146.6,588.0 2154.4,593.9 2162.2,599.8 2169.9,605.7 2177.6,611.5 2185.1,617.2 2192.6,622.8 2200.0,628.4 2207.3,633.9 2214.5,639.3 2221.6,644.7 2228.6,649.9 2235.4,655.1 2242.1,660.2 2248.7,665.2 2255.1,670.1 2261.3,674.8 2267.3,679.3 2273.2,683.8 2278.9,688.1 2284.4,692.2 2289.8,696.3 2295.1,700.3 2300.3,704.2 2305.3,708.0 2310.2,711.7 2314.9,715.3 2319.4,718.6 2323.7,721.9 2327.8,725.0 2331.8,728.0 2335.7,730.9 2339.4,733.7 2342.9,736.3 2346.3,738.9 2349.5,741.4 2352.6,743.7 2355.5,745.9 2358.4,748.1 2361.0,750.1 2363.6,752.1 2366.1,753.9 2368.4,755.7 2370.7,757.4 2372.8,759.0 2374.8,760.5 2376.8,762.0 2378.7,763.4 2380.5,764.8 2382.2,766.1 2383.9,767.3 2385.5,768.6 2387.0,769.7 2388.5,770.9 2389.9,772.0 2391.3,773.0 2392.7,774.0 2394.0,775.0 2395.2,775.9 2396.4,776.8 2397.5,777.7 2398.6,778.5 2399.6,779.3 2400.6,780.0 2401.6,780.7 2402.5,781.4 2403.3,782.0 2404.1,782.6 2404.9,783.2 2405.5,783.7 2406.2,784.2 2406.8,784.7 2407.5,785.2 2408.0,785.6 2408.6,786.0 2409.1,786.4 2409.6,786.8 2410.1,787.1 2410.5,787.5 2411.0,787.8 2411.3,788.1 2411.6,788.3 2305.2,734.5" fill="url(#gFallU)"/><polygon points="1725.8,976.8 2305.2,734.5 2411.6,788.3 1751.1,1026.0" fill="url(#gFallP)"/><polygon points="1918.2,735.4 1903.2,492.2 2305.2,734.5" fill="url(#gT1)"/><polygon points="1918.2,735.4 2305.2,734.5 1725.8,976.8" fill="url(#gT2)"/><polygon points="1918.2,735.4 1725.8,976.8 1903.2,492.2" fill="url(#gT3)"/><polygon points="1903.2,492.2 2305.2,734.5 1725.8,976.8" fill="url(#gTW)"/><rect x="2197.4" y="288.0" width="335.0" height="281.5" fill="url(#gInA)"/><polygon points="2198,318 2532,539.5 2532,569 2198,569" fill="url(#gInB)"/><line x1="1541.0" y1="1030.6" x2="1550.0" y2="1030.6" stroke="#a0a0a0" stroke-width="1.8"/><text x="1539.5" y="1038.4" font-size="22.67" fill="#e2dfd8" text-anchor="end">0</text><line x1="1541.0" y1="940.9" x2="1550.0" y2="940.9" stroke="#a0a0a0" stroke-width="1.8"/><text x="1539.5" y="948.7" font-size="22.67" fill="#e2dfd8" text-anchor="end">0,1</text><line x1="1541.0" y1="851.1" x2="1550.0" y2="851.1" stroke="#a0a0a0" stroke-width="1.8"/><text x="1539.5" y="858.9" font-size="22.67" fill="#e2dfd8" text-anchor="end">0,2</text><line x1="1541.0" y1="761.4" x2="1550.0" y2="761.4" stroke="#a0a0a0" stroke-width="1.8"/><text x="1539.5" y="769.2" font-size="22.67" fill="#e2dfd8" text-anchor="end">0,3</text><line x1="1541.0" y1="671.6" x2="1550.0" y2="671.6" stroke="#a0a0a0" stroke-width="1.8"/><text x="1539.5" y="679.4" font-size="22.67" fill="#e2dfd8" text-anchor="end">0,4</text><line x1="1541.0" y1="581.9" x2="1550.0" y2="581.9" stroke="#a0a0a0" stroke-width="1.8"/><text x="1539.5" y="589.7" font-size="22.67" fill="#e2dfd8" text-anchor="end">0,5</text><line x1="1541.0" y1="492.2" x2="1550.0" y2="492.2" stroke="#a0a0a0" stroke-width="1.8"/><text x="1539.5" y="500.0" font-size="22.67" fill="#e2dfd8" text-anchor="end">0,6</text><line x1="1541.0" y1="402.4" x2="1550.0" y2="402.4" stroke="#a0a0a0" stroke-width="1.8"/><text x="1539.5" y="410.2" font-size="22.67" fill="#e2dfd8" text-anchor="end">0,7</text><line x1="1541.0" y1="312.7" x2="1550.0" y2="312.7" stroke="#a0a0a0" stroke-width="1.8"/><text x="1539.5" y="320.5" font-size="22.67" fill="#e2dfd8" text-anchor="end">0,8</text><line x1="1548.5" y1="1031.0" x2="1548.5" y2="1040.0" stroke="#a0a0a0" stroke-width="1.8"/><text x="1548.5" y="1064.3" font-size="22.67" fill="#e2dfd8" text-anchor="middle">0</text><line x1="1666.7" y1="1031.0" x2="1666.7" y2="1040.0" stroke="#a0a0a0" stroke-width="1.8"/><text x="1666.7" y="1064.3" font-size="22.67" fill="#e2dfd8" text-anchor="middle">0,1</text><line x1="1785.0" y1="1031.0" x2="1785.0" y2="1040.0" stroke="#a0a0a0" stroke-width="1.8"/><text x="1785.0" y="1064.3" font-size="22.67" fill="#e2dfd8" text-anchor="middle">0,2</text><line x1="1903.2" y1="1031.0" x2="1903.2" y2="1040.0" stroke="#a0a0a0" stroke-width="1.8"/><text x="1903.2" y="1064.3" font-size="22.67" fill="#e2dfd8" text-anchor="middle">0,3</text><line x1="2021.4" y1="1031.0" x2="2021.4" y2="1040.0" stroke="#a0a0a0" stroke-width="1.8"/><text x="2021.4" y="1064.3" font-size="22.67" fill="#e2dfd8" text-anchor="middle">0,4</text><line x1="2139.7" y1="1031.0" x2="2139.7" y2="1040.0" stroke="#a0a0a0" stroke-width="1.8"/><text x="2139.7" y="1064.3" font-size="22.67" fill="#e2dfd8" text-anchor="middle">0,5</text><line x1="2257.9" y1="1031.0" x2="2257.9" y2="1040.0" stroke="#a0a0a0" stroke-width="1.8"/><text x="2257.9" y="1064.3" font-size="22.67" fill="#e2dfd8" text-anchor="middle">0,6</text><line x1="2376.1" y1="1031.0" x2="2376.1" y2="1040.0" stroke="#a0a0a0" stroke-width="1.8"/><text x="2376.1" y="1064.3" font-size="22.67" fill="#e2dfd8" text-anchor="middle">0,7</text><line x1="2494.3" y1="1031.0" x2="2494.3" y2="1040.0" stroke="#a0a0a0" stroke-width="1.8"/><text x="2494.3" y="1064.3" font-size="22.67" fill="#e2dfd8" text-anchor="middle">0,8</text><rect x="0.0" y="144.0" width="1.8" height="1382.0" fill="#242424"/><rect x="0.0" y="1526.0" width="2560.0" height="102.0" fill="url(#gBar)"/><rect x="2" y="1526" width="73.5" height="100" rx="6" fill="url(#gPan)"/><circle cx="38.3" cy="1541.6" r="12" fill="url(#gUp)"/><path d="M32.4 1543.2 L38.8 1536.6 L45.3 1543.2 Z" fill="#222"/><rect x="10" y="1568.6" width="57.3" height="49.4" rx="5" fill="#ffff00" stroke="#c8c400" stroke-width="1"/><rect x="85.5" y="1526" width="245.5" height="100" rx="6" fill="url(#gPan)"/><rect x="94.5" y="1534.9" width="227.5" height="58.8" rx="5" fill="#c2c2a6" stroke="#9a9a40" stroke-width="1.2"/><text x="208.2" y="1620.0" font-size="18.90" fill="#333333" text-anchor="middle" font-weight="bold">20%</text><rect x="334.9" y="1526" width="245.5" height="100" rx="6" fill="url(#gPan)"/><rect x="343.9" y="1534.9" width="227.5" height="58.8" rx="5" fill="#c4c488" stroke="#9a9a40" stroke-width="1.2"/><text x="457.6" y="1620.0" font-size="18.90" fill="#333333" text-anchor="middle" font-weight="bold">40%</text><rect x="584.3" y="1526" width="245.5" height="100" rx="6" fill="url(#gPan)"/><rect x="593.3" y="1534.9" width="227.5" height="58.8" rx="5" fill="#c2c26c" stroke="#9a9a40" stroke-width="1.2"/><text x="707.0" y="1620.0" font-size="18.90" fill="#333333" text-anchor="middle" font-weight="bold">60%</text><rect x="833.7" y="1526" width="245.5" height="100" rx="6" fill="url(#gPan)"/><rect x="842.7" y="1534.9" width="227.5" height="58.8" rx="5" fill="#c1c151" stroke="#9a9a40" stroke-width="1.2"/><text x="956.5" y="1620.0" font-size="18.90" fill="#333333" text-anchor="middle" font-weight="bold">80%</text><rect x="1083.1" y="1526" width="245.5" height="100" rx="6" fill="url(#gPanSel)"/><rect x="1092.1" y="1534.9" width="227.5" height="58.8" rx="5" fill="#c4c400" stroke="#8a8a00" stroke-width="1.2"/><text x="1205.8" y="1620.0" font-size="18.90" fill="#ffffff" text-anchor="middle" font-weight="bold">100%</text><rect x="2030.2" y="1526" width="78.4" height="104" rx="6" fill="url(#gCtl)"/><line x1="2030.2" y1="1555.8" x2="2108.6" y2="1555.8" stroke="#4a4a4a" stroke-width="1.5"/><rect x="2030.2" y="1557" width="78.4" height="73" rx="0" fill="url(#gCtl)"/><circle cx="2069.3" cy="1540.7" r="12" fill="url(#gCtlC)"/><path d="M2062.5 1543.5 L2069.3 1536.5 L2076 1543.5 Z" fill="#222"/><rect x="2045.5" y="1567.5" width="46" height="47.5" rx="6" fill="#c8c8c8" stroke="#111" stroke-width="3.5"/><rect x="2058.3" y="1580.7" width="22" height="22" fill="#000"/><rect x="2110.5" y="1526" width="74.3" height="49.6" fill="url(#gCtl)"/><circle cx="2148.2" cy="1550.7" r="16.5" fill="url(#gCtlC)"/><rect x="2140.8" y="1543.2" width="15" height="15" fill="#2a2a2a"/><rect x="2186" y="1526" width="72.8" height="49.6" fill="url(#gCtl)"/><circle cx="2223.0" cy="1550.7" r="16.5" fill="url(#gCtlC)"/><path d="M2217.0 1542 L2231.0 1551 L2217.0 1560 Z" fill="#2a2a2a"/><rect x="2260" y="1526" width="72.5" height="49.6" fill="url(#gCtl)"/><circle cx="2296.8" cy="1550.7" r="16.5" fill="url(#gCtlC)"/><path d="M2290.8 1542.5 h-3 v17 h3 M2302.8 1542.5 h3 v17 h-3" fill="none" stroke="#2a2a2a" stroke-width="2.6"/><circle cx="2294.3" cy="1549" r="1.3" fill="#2a2a2a"/><circle cx="2299.3" cy="1549" r="1.3" fill="#2a2a2a"/><rect x="2333.7" y="1526" width="72.5" height="49.6" fill="url(#gCtl)"/><circle cx="2370.6" cy="1550.7" r="16.5" fill="url(#gCtlC)"/><path d="M2370.6 1551 C2366.6 1546 2359.6 1546 2359.6 1551 C2359.6 1556 2366.6 1556 2370.6 1551 C2374.6 1546 2381.6 1546 2381.6 1551 C2381.6 1556 2374.6 1556 2370.6 1551 Z" fill="none" stroke="#2a2a2a" stroke-width="2.8"/><rect x="2407.4" y="1526" width="72.4" height="49.6" fill="url(#gCtl)"/><circle cx="2444.2" cy="1550.7" r="16.5" fill="url(#gCtlC)"/><path d="M2436.2 1549 A8.5 8.5 0 0 1 2450.2 1544.5 M2452.2 1553 A8.5 8.5 0 0 1 2438.2 1557.5" fill="none" stroke="#2a2a2a" stroke-width="3"/><path d="M2447.2 1540.5 L2454.2 1542 L2451.2 1548.5 Z M2441.2 1561.5 L2434.2 1560 L2437.2 1553.5 Z" fill="#2a2a2a"/><circle cx="2519.8" cy="1550.7" r="16" fill="#2e2e2e"/><path d="M2110.5 1584 Q2110.5 1578 2116.5 1578 H2334 V1630 H2110.5 Z" fill="url(#gCtl)"/><path d="M2335.2 1578 H2551 Q2557 1578 2557 1584 V1630 H2335.2 Z" fill="url(#gCtl)"/><circle cx="2160.5" cy="1601.2" r="16.5" fill="url(#gCtlC)"/><circle cx="2510.5" cy="1601.2" r="16.5" fill="url(#gCtlC)"/><path d="M2159 1594 L2153 1601 L2159 1608 M2166 1594 L2160 1601 L2166 1608" fill="none" stroke="#2a2a2a" stroke-width="2.6"/><path d="M2506 1594 L2512 1601 L2506 1608 M2513 1594 L2519 1601 L2513 1608" fill="none" stroke="#2a2a2a" stroke-width="2.6"/><text x="2205.8" y="1614.4" font-size="36.34" fill="#2e2e2e" font-weight="bold" textLength="81.5" lengthAdjust="spacingAndGlyphs">Back</text><text x="2380.7" y="1614.4" font-size="36.34" fill="#2e2e2e" font-weight="bold" textLength="83.3" lengthAdjust="spacingAndGlyphs">Next</text>
</svg>
<canvas id="cie" width="993" height="755" style="left:1550px;top:277px;"></canvas>
<svg width="2560" height="1628" viewBox="0 0 2560 1628" font-family='"Liberation Sans", sans-serif'>
<line x1="1550.0" y1="276.0" x2="1550.0" y2="1040.0" stroke="#a0a0a0" stroke-width="2"/><line x1="1550.0" y1="277.0" x2="2542.6" y2="277.0" stroke="#a0a0a0" stroke-width="2"/><line x1="2542.6" y1="276.0" x2="2542.6" y2="1031.0" stroke="#a0a0a0" stroke-width="2"/><line x1="1541.0" y1="1031.0" x2="2542.6" y2="1031.0" stroke="#a0a0a0" stroke-width="2"/><rect x="2197.4" y="288" width="335" height="281.5" fill="none" stroke="#8c8c8c" stroke-width="2"/><rect x="1983.8" y="723.9" width="19.5" height="19.5" fill="none" stroke="#ffffff" stroke-width="2.6"/><rect x="2063.6" y="723.9" width="19.5" height="19.5" fill="none" stroke="#ffffff" stroke-width="2.6"/><rect x="2134.1" y="723.9" width="19.5" height="19.5" fill="none" stroke="#ffffff" stroke-width="2.6"/><rect x="2209.7" y="723.9" width="19.5" height="19.5" fill="none" stroke="#ffffff" stroke-width="2.6"/><rect x="2294.8" y="723.9" width="19.5" height="19.5" fill="none" stroke="#ffffff" stroke-width="2.6"/><rect x="1904.7" y="675.6" width="19.5" height="19.5" fill="none" stroke="#ffffff" stroke-width="2.6"/><rect x="1902.7" y="627.5" width="19.5" height="19.5" fill="none" stroke="#ffffff" stroke-width="2.6"/><rect x="1898.3" y="581.5" width="19.5" height="19.5" fill="none" stroke="#ffffff" stroke-width="2.6"/><rect x="1896.5" y="534.5" width="19.5" height="19.5" fill="none" stroke="#ffffff" stroke-width="2.6"/><rect x="1892.0" y="481.6" width="19.5" height="19.5" fill="none" stroke="#ffffff" stroke-width="2.6"/><rect x="1869.0" y="773.5" width="19.5" height="19.5" fill="none" stroke="#ffffff" stroke-width="2.6"/><rect x="1832.2" y="822.0" width="19.5" height="19.5" fill="none" stroke="#ffffff" stroke-width="2.6"/><rect x="1794.2" y="868.0" width="19.5" height="19.5" fill="none" stroke="#ffffff" stroke-width="2.6"/><rect x="1756.5" y="914.0" width="19.5" height="19.5" fill="none" stroke="#ffffff" stroke-width="2.6"/><rect x="1715.0" y="965.5" width="19.5" height="19.5" fill="none" stroke="#ffffff" stroke-width="2.6"/><rect x="1887.2" y="726.1" width="19.5" height="19.5" fill="none" stroke="#ffffff" stroke-width="2.6"/><rect x="1866.8" y="726.1" width="19.5" height="19.5" fill="none" stroke="#ffffff" stroke-width="2.6"/><rect x="1846.2" y="726.1" width="19.5" height="19.5" fill="none" stroke="#ffffff" stroke-width="2.6"/><rect x="1826.0" y="726.1" width="19.5" height="19.5" fill="none" stroke="#ffffff" stroke-width="2.6"/><rect x="1804.0" y="726.1" width="19.5" height="19.5" fill="none" stroke="#ffffff" stroke-width="2.6"/><rect x="1910.8" y="757.9" width="19.5" height="19.5" fill="none" stroke="#ffffff" stroke-width="2.6"/><rect x="1913.2" y="791.1" width="19.5" height="19.5" fill="none" stroke="#ffffff" stroke-width="2.6"/><rect x="1913.2" y="818.0" width="19.5" height="19.5" fill="none" stroke="#ffffff" stroke-width="2.6"/><rect x="1914.8" y="849.4" width="19.5" height="19.5" fill="none" stroke="#ffffff" stroke-width="2.6"/><rect x="1917.5" y="882.9" width="19.5" height="19.5" fill="none" stroke="#ffffff" stroke-width="2.6"/><rect x="1934.0" y="692.2" width="19.5" height="19.5" fill="none" stroke="#ffffff" stroke-width="2.6"/><rect x="1959.5" y="658.9" width="19.5" height="19.5" fill="none" stroke="#ffffff" stroke-width="2.6"/><rect x="1984.0" y="630.1" width="19.5" height="19.5" fill="none" stroke="#ffffff" stroke-width="2.6"/><rect x="2006.8" y="600.8" width="19.5" height="19.5" fill="none" stroke="#ffffff" stroke-width="2.6"/><rect x="2033.8" y="566.8" width="19.5" height="19.5" fill="none" stroke="#ffffff" stroke-width="2.6"/><rect x="1908.2" y="725.4" width="21" height="21" fill="none" stroke="#111111" stroke-width="3"/><circle cx="1973.2" cy="729.4" r="6.6" fill="#b58f8f" stroke="#111" stroke-width="2.2"/><circle cx="2037.8" cy="725.1" r="6.6" fill="#ba7676" stroke="#111" stroke-width="2.2"/><circle cx="2100.3" cy="716.6" r="6.6" fill="#be6262" stroke="#111" stroke-width="2.2"/><circle cx="2171.5" cy="710.4" r="6.6" fill="#c34949" stroke="#111" stroke-width="2.2"/><circle cx="2238.0" cy="704.4" r="6.6" fill="#d20000" stroke="#111" stroke-width="2.2"/><circle cx="1927.1" cy="696.1" r="6.6" fill="#8fb18f" stroke="#111" stroke-width="2.2"/><circle cx="1937.9" cy="654.0" r="6.6" fill="#76b376" stroke="#111" stroke-width="2.2"/><circle cx="1947.7" cy="610.3" r="6.6" fill="#62b562" stroke="#111" stroke-width="2.2"/><circle cx="1958.5" cy="564.4" r="6.6" fill="#49b749" stroke="#111" stroke-width="2.2"/><circle cx="1970.8" cy="516.8" r="6.6" fill="#00be00" stroke="#111" stroke-width="2.2"/><circle cx="1879.3" cy="777.8" r="6.6" fill="#8f8fb3" stroke="#111" stroke-width="2.2"/><circle cx="1841.9" cy="815.2" r="6.6" fill="#7676b7" stroke="#111" stroke-width="2.2"/><circle cx="1806.4" cy="852.5" r="6.6" fill="#6262ba" stroke="#111" stroke-width="2.2"/><circle cx="1773.0" cy="888.1" r="6.6" fill="#4949bd" stroke="#111" stroke-width="2.2"/><circle cx="1741.1" cy="921.4" r="6.6" fill="#0000c8" stroke="#111" stroke-width="2.2"/><circle cx="1899.9" cy="735.9" r="6.6" fill="#8fb0b2" stroke="#111" stroke-width="2.2"/><circle cx="1887.7" cy="737.2" r="6.6" fill="#76b2b5" stroke="#111" stroke-width="2.2"/><circle cx="1870.0" cy="739.8" r="6.6" fill="#62b3b7" stroke="#111" stroke-width="2.2"/><circle cx="1856.0" cy="741.7" r="6.6" fill="#49b4ba" stroke="#111" stroke-width="2.2"/><circle cx="1841.7" cy="741.7" r="6.6" fill="#00b9c3" stroke="#111" stroke-width="2.2"/><circle cx="1910.3" cy="760.4" r="6.6" fill="#b38fb3" stroke="#111" stroke-width="2.2"/><circle cx="1904.4" cy="787.6" r="6.6" fill="#b776b7" stroke="#111" stroke-width="2.2"/><circle cx="1900.0" cy="808.8" r="6.6" fill="#ba62ba" stroke="#111" stroke-width="2.2"/><circle cx="1893.6" cy="833.6" r="6.6" fill="#bd49bd" stroke="#111" stroke-width="2.2"/><circle cx="1887.7" cy="859.1" r="6.6" fill="#c800c8" stroke="#111" stroke-width="2.2"/><circle cx="1943.8" cy="706.5" r="6.6" fill="#b3b18f" stroke="#111" stroke-width="2.2"/><circle cx="1973.2" cy="675.0" r="6.6" fill="#b7b376" stroke="#111" stroke-width="2.2"/><circle cx="2002.1" cy="646.2" r="6.6" fill="#bab562" stroke="#111" stroke-width="2.2"/><circle cx="2031.3" cy="614.4" r="6.6" fill="#bdb749" stroke="#111" stroke-width="2.2"/><circle cx="2062.8" cy="581.3" r="6.6" fill="#c8be00" stroke="#111" stroke-width="2.2"/><circle cx="1916.7" cy="735.9" r="6.8" fill="#ffffff" stroke="#111" stroke-width="2.2"/><rect x="2353.0" y="417.0" width="20" height="20" fill="none" stroke="#ffffff" stroke-width="2.6"/><circle cx="2473.7" cy="457.2" r="6.8" fill="#c8c000" stroke="#111" stroke-width="2.2"/><rect x="2552.0" y="144.0" width="8.0" height="1382.0" fill="url(#gEdge)"/>
</svg>
<script>
(function(){
var L=[[0.1714,0.0051],[0.17126,0.00519],[0.17105,0.00531],[0.17081,0.00546],[0.17056,0.00562],[0.1703,0.0058],[0.17005,0.00598],[0.16979,0.00618],[0.16952,0.0064],[0.16922,0.00664],[0.1689,0.0069],[0.16855,0.00719],[0.16817,0.00751],[0.16776,0.00785],[0.16734,0.00821],[0.1669,0.0086],[0.16644,0.00901],[0.16597,0.00945],[0.16548,0.00991],[0.16496,0.01039],[0.1644,0.0109],[0.16381,0.01143],[0.1632,0.01197],[0.16254,0.01254],[0.16185,0.01315],[0.1611,0.0138],[0.16029,0.0145],[0.15944,0.01524],[0.15854,0.01601],[0.15759,0.01683],[0.1566,0.0177],[0.15557,0.0186],[0.15451,0.01952],[0.15339,0.0205],[0.15223,0.02155],[0.151,0.0227],[0.14971,0.02392],[0.14837,0.0252],[0.14698,0.02657],[0.14552,0.02806],[0.144,0.0297],[0.14244,0.03141],[0.14085,0.03318],[0.13918,0.03511],[0.13741,0.03732],[0.1355,0.0399],[0.13346,0.04281],[0.1313,0.04597],[0.12902,0.04947],[0.12662,0.05339],[0.1241,0.0578],[0.12146,0.06262],[0.11871,0.06779],[0.11582,0.07345],[0.11279,0.07974],[0.1096,0.0868],[0.10625,0.09454],[0.10276,0.10288],[0.09911,0.11194],[0.0953,0.12184],[0.0913,0.1327],[0.08707,0.14446],[0.0826,0.15705],[0.078,0.17055],[0.07333,0.18506],[0.0687,0.2007],[0.06406,0.2175],[0.05936,0.2354],[0.05465,0.25433],[0.04998,0.27422],[0.0454,0.295],[0.04082,0.31691],[0.03622,0.34001],[0.03172,0.36392],[0.02744,0.38827],[0.0235,0.4127],[0.01984,0.43748],[0.01638,0.46285],[0.01321,0.48841],[0.01045,0.51373],[0.0082,0.5384],[0.00641,0.56261],[0.005,0.58664],[0.00406,0.6102],[0.00367,0.63301],[0.0039,0.6548],[0.00474,0.67576],[0.00615,0.69608],[0.00813,0.71547],[0.01071,0.73361],[0.0139,0.7502],[0.01777,0.76535],[0.02232,0.77926],[0.02743,0.79177],[0.03299,0.80274],[0.0389,0.812],[0.04524,0.81939],[0.0521,0.82501],[0.05932,0.82912],[0.06677,0.83196],[0.0743,0.8338],[0.08198,0.83436],[0.08991,0.83349],[0.09798,0.83157],[0.10611,0.829],[0.1142,0.8262],[0.1223,0.82302],[0.13047,0.81919],[0.13864,0.81492],[0.14674,0.81042],[0.1547,0.8059],[0.16251,0.80134],[0.17022,0.79661],[0.17784,0.79173],[0.18539,0.78672],[0.1929,0.7816],[0.20034,0.77638],[0.20771,0.77103],[0.21503,0.76556],[0.22232,0.75998],[0.2296,0.7543],[0.23688,0.7485],[0.24414,0.74259],[0.25137,0.73657],[0.25859,0.73047],[0.2658,0.7243],[0.27299,0.71805],[0.28015,0.71171],[0.28731,0.7053],[0.29445,0.69882],[0.3016,0.6923],[0.30874,0.68573],[0.31588,0.67909],[0.32302,0.6724],[0.33016,0.66567],[0.3373,0.6589],[0.34446,0.65209],[0.35162,0.64524],[0.35879,0.63834],[0.36595,0.63143],[0.3731,0.6245],[0.38024,0.61755],[0.38736,0.61058],[0.39448,0.60358],[0.4016,0.59659],[0.4087,0.5896],[0.4158,0.58261],[0.42291,0.57562],[0.43,0.56863],[0.43707,0.56165],[0.4441,0.5547],[0.4511,0.54776],[0.45808,0.54083],[0.46503,0.53392],[0.47194,0.52704],[0.4788,0.5202],[0.48563,0.5134],[0.49242,0.50663],[0.49917,0.4999],[0.50587,0.49322],[0.5125,0.4866],[0.51908,0.48004],[0.52561,0.47352],[0.53208,0.46707],[0.53848,0.46069],[0.5448,0.4544],[0.55104,0.44819],[0.55723,0.44206],[0.56333,0.436],[0.56932,0.43005],[0.5752,0.4242],[0.58097,0.41844],[0.58665,0.41276],[0.59221,0.40719],[0.59763,0.40176],[0.6029,0.3965],[0.608,0.39142],[0.61294,0.38649],[0.61774,0.38171],[0.62242,0.37706],[0.627,0.3725],[0.63148,0.36804],[0.63586,0.36367],[0.64012,0.35943],[0.64424,0.35534],[0.6482,0.3514],[0.652,0.34763],[0.65566,0.34402],[0.65917,0.34056],[0.66255,0.33722],[0.6658,0.334],[0.66892,0.3309],[0.6719,0.32792],[0.67475,0.32506],[0.67748,0.32232],[0.6801,0.3197],[0.6826,0.3172],[0.68498,0.31482],[0.68724,0.31255],[0.68941,0.31038],[0.6915,0.3083],[0.6935,0.30632],[0.69539,0.30445],[0.6972,0.30266],[0.69893,0.30095],[0.7006,0.2993],[0.70219,0.29771],[0.70371,0.2962],[0.70515,0.29475],[0.70655,0.29336],[0.7079,0.292],[0.70921,0.29069],[0.71048,0.28942],[0.7117,0.2882],[0.71287,0.28703],[0.714,0.2859],[0.71509,0.28481],[0.71613,0.28377],[0.71712,0.28277],[0.71808,0.28181],[0.719,0.2809],[0.71988,0.28004],[0.72072,0.27922],[0.72152,0.27844],[0.72228,0.2777],[0.723,0.277],[0.72368,0.27633],[0.72431,0.2757],[0.7249,0.27511],[0.72546,0.27454],[0.726,0.274],[0.72651,0.27349],[0.727,0.273],[0.72746,0.27254],[0.72789,0.27211],[0.7283,0.2717],[0.72871,0.27129],[0.7291,0.2709],[0.72947,0.27053],[0.72978,0.27022],[0.73,0.27]];
var cv=document.getElementById('cie'),ctx=cv.getContext('2d');
var W=cv.width,H=cv.height,OX=1550,OY=277;
function col(x,y,o,i){
  if(y<1e-4){y=1e-4;}
  var X=x/y,Z=(1-x-y)/y;
  var r=3.2406*X-1.5372-0.4986*Z,g=-0.9689*X+1.8758+0.0415*Z,b=0.0557*X-0.2040+1.0570*Z;
  var ins=(r>=0&&g>=0&&b>=0);
  if(r<0)r=0;if(g<0)g=0;if(b<0)b=0;
  var m=Math.max(r,g,b);if(m<=0)m=1;
  r=r/m;g=g/m;b=b/m;
  var k=ins?255:255*0.6;
  o[i]=r*k;o[i+1]=g*k;o[i+2]=b*k;o[i+3]=255;
}
ctx.fillStyle='#232323';ctx.fillRect(0,0,W,H);
var off=document.createElement('canvas');off.width=W;off.height=H;
var oc=off.getContext('2d');var im=oc.createImageData(W,H);var d=im.data;
for(var py=0;py<H;py++){for(var px=0;px<W;px++){
  var x=(OX+px+0.5-1548.5)/1182.3,y=(1030.6-(OY+py+0.5))/897.4;
  col(x,y,d,(py*W+px)*4);
}}
oc.putImageData(im,0,0);
ctx.save();ctx.beginPath();
for(var j=0;j<L.length;j++){var q=L[j];var sx=1548.5+q[0]*1182.3-OX,sy=1030.6-q[1]*897.4-OY;if(j==0)ctx.moveTo(sx,sy);else ctx.lineTo(sx,sy);}
ctx.closePath();ctx.clip();ctx.drawImage(off,0,0);ctx.restore();
// inset
var IX1=2193,IY1=282,IX2=2537,IY2=574;
ctx.fillStyle='#262626';ctx.fillRect(IX1-OX,IY1-OY,IX2-IX1,IY2-IY1);
var AX1=2198,AY1=288.5,AX2=2532,AY2=569;
var iw=AX2-AX1,ih=AY2-AY1;var im2=ctx.createImageData(iw,ih);var d2=im2.data;
for(var py=0;py<ih;py++){for(var px=0;px<iw;px++){
  var x=0.4193+(AX1+px+0.5-2363)/6709,y=0.5053-(AY1+py+0.5-427)/5610;
  col(x,y,d2,(py*iw+px)*4);
}}
ctx.putImageData(im2,AX1-OX,AY1-OY);
})();
</script>
</body></html>
